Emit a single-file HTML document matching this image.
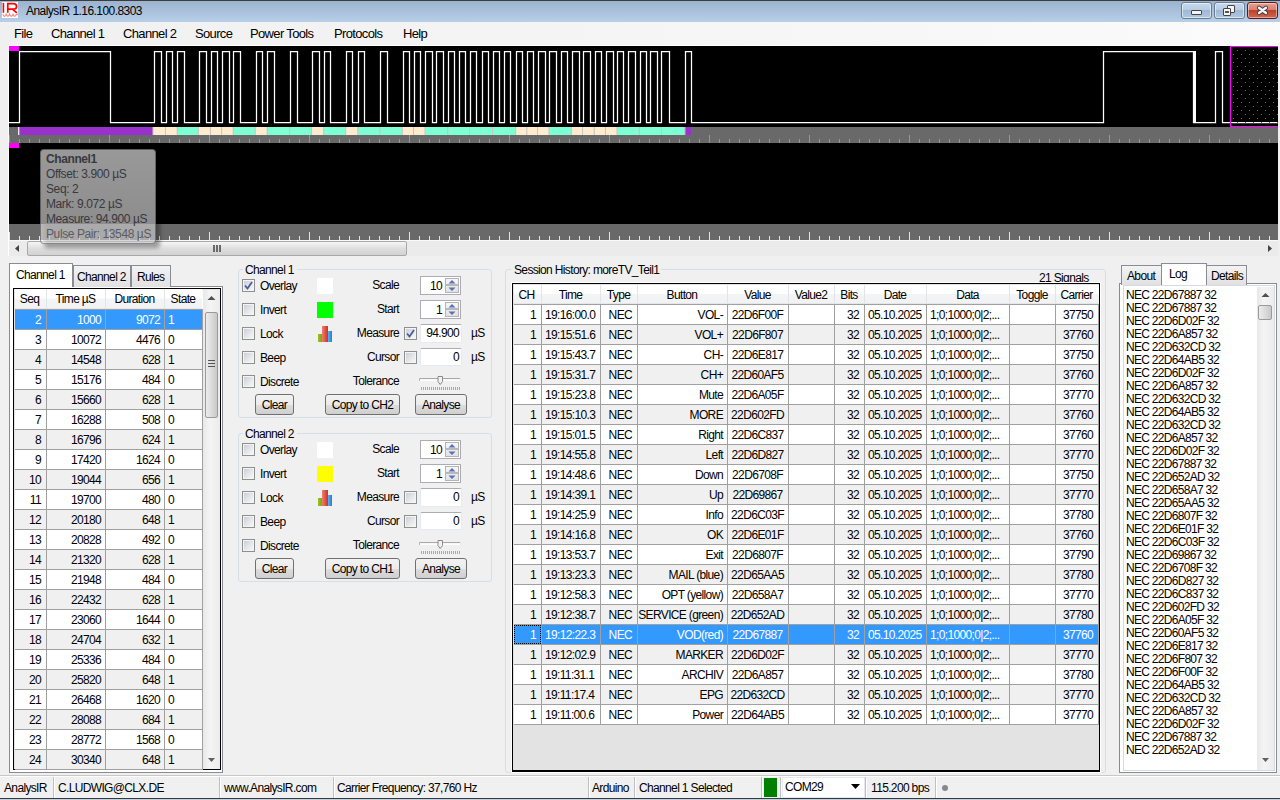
<!DOCTYPE html><html><head><meta charset="utf-8"><style>
*{margin:0;padding:0;box-sizing:border-box}
html,body{width:1280px;height:800px;overflow:hidden;background:#f0f0f0;font-family:"Liberation Sans",sans-serif;font-size:12px;color:#000;letter-spacing:-0.65px}
.ab{position:absolute}
.t{position:absolute;white-space:nowrap;line-height:14px}
.r{text-align:right}
.c{text-align:center}
</style></head><body>
<div class="ab" style="left:0px;top:0px;width:1280px;height:1px;background:#3c3c3c"></div>
<div class="ab" style="left:0px;top:1px;width:1280px;height:21px;background:linear-gradient(#9bb3cf,#b8cfe8)"></div>
<div class="ab" style="left:2px;top:2px;width:16px;height:16px;background:#fff"></div>
<svg class="ab" style="left:0;top:0" width="20" height="20"><rect x="2.6" y="2.9" width="1.6" height="9.9" fill="#f00"/><path d="M7.8 12.8 V3.7 H13.2 Q16.6 3.7 16.6 6.4 Q16.6 9.1 13.2 9.1 H7.8 M12.4 9.1 L16.9 12.8" stroke="#f00" stroke-width="1.7" fill="none"/><path d="M2.8 14.3 Q4.5 18.3 6.2 14.3 Q7.9 18.3 9.6 14.3 Q11.3 18.3 13 14.3 Q14.7 18.3 16.4 14.3 L18 14.3" stroke="#ff8c8c" stroke-width="1.3" fill="none"/></svg>
<div class="t " style="left:26px;top:4px;font-size:12px;letter-spacing:-0.55px">AnalysIR 1.16.100.8303</div>
<div class="ab" style="left:1181px;top:2px;width:31px;height:17px;background:linear-gradient(#c6d8ec 0%,#b8cde4 45%,#9fb8d4 50%,#b0c8e2 100%);border:1px solid #6a7c92;border-radius:3px;box-shadow:inset 0 0 0 1px rgba(255,255,255,0.55)"></div>
<div class="ab" style="left:1214px;top:2px;width:31px;height:17px;background:linear-gradient(#c6d8ec 0%,#b8cde4 45%,#9fb8d4 50%,#b0c8e2 100%);border:1px solid #6a7c92;border-radius:3px;box-shadow:inset 0 0 0 1px rgba(255,255,255,0.55)"></div>
<div class="ab" style="left:1247px;top:2px;width:31px;height:17px;background:linear-gradient(#e8a090 0%,#d98070 45%,#c0402a 50%,#d06850 100%);border:1px solid #5a1a1a;border-radius:3px;box-shadow:inset 0 0 0 1px rgba(255,255,255,0.45)"></div>
<div class="ab" style="left:1191px;top:10px;width:11px;height:5px;background:#f4f4f4;border:1px solid #444;border-radius:1px"></div>
<div class="ab" style="left:1227px;top:5px;width:8px;height:8px;background:#f4f4f4;border:1px solid #444;border-radius:1px"></div>
<div class="ab" style="left:1223px;top:8px;width:8px;height:8px;background:#f4f4f4;border:1px solid #444;border-radius:1px"></div>
<div class="ab" style="left:1225px;top:11px;width:4px;height:2px;background:#555"></div>
<svg class="ab" style="left:1247px;top:2px" width="31" height="17"><path d="M12 5.8 L19 11 M19 5.8 L12 11" stroke="#3a3a4a" stroke-width="4.2" stroke-linecap="round"/><path d="M12 5.8 L19 11 M19 5.8 L12 11" stroke="#f4f4f4" stroke-width="2.4" stroke-linecap="round"/></svg>
<div class="ab" style="left:0px;top:22px;width:1280px;height:23px;background:linear-gradient(90deg,#f0f0f0 0%,#f5f5f5 50%,#fbfbfb 100%)"></div>
<div class="t " style="left:14px;top:26px;font-size:13px;letter-spacing:-0.65px;line-height:16px">File</div>
<div class="t " style="left:51px;top:26px;font-size:13px;letter-spacing:-0.65px;line-height:16px">Channel 1</div>
<div class="t " style="left:123px;top:26px;font-size:13px;letter-spacing:-0.65px;line-height:16px">Channel 2</div>
<div class="t " style="left:195px;top:26px;font-size:13px;letter-spacing:-0.65px;line-height:16px">Source</div>
<div class="t " style="left:250px;top:26px;font-size:13px;letter-spacing:-0.65px;line-height:16px">Power Tools</div>
<div class="t " style="left:334px;top:26px;font-size:13px;letter-spacing:-0.65px;line-height:16px">Protocols</div>
<div class="t " style="left:403px;top:26px;font-size:13px;letter-spacing:-0.65px;line-height:16px">Help</div>
<div class="ab" style="left:8px;top:45px;width:1271px;height:1px;background:#fff"></div>
<div class="ab" style="left:8px;top:45px;width:1px;height:211px;background:#fff"></div>
<div class="ab" style="left:9px;top:46px;width:1269px;height:81px;background:#000"></div>
<div class="ab" style="left:9px;top:127px;width:1269px;height:16px;background:#696969"></div>
<div class="ab" style="left:9px;top:143px;width:1269px;height:81px;background:#000"></div>
<div class="ab" style="left:9px;top:224px;width:1269px;height:16px;background:#696969"></div>
<div class="ab" style="left:9px;top:46px;width:10px;height:5px;background:#f0f"></div>
<div class="ab" style="left:9px;top:143px;width:10px;height:5px;background:#f0f"></div>
<svg class="ab" style="left:0;top:0" width="1280" height="260"><path d="M9 122.5 L19.5 122.5 L19.5 51.5 L110.5 51.5 L110.5 122.5 L154.5 122.5 L154.5 51.5 L161.5 51.5 L161.5 122.5 L166.5 122.5 L166.5 51.5 L172.5 51.5 L172.5 122.5 L177.5 122.5 L177.5 51.5 L184.5 51.5 L184.5 122.5 L199.5 122.5 L199.5 51.5 L206.5 51.5 L206.5 122.5 L211.5 122.5 L211.5 51.5 L217.5 51.5 L217.5 122.5 L222.5 122.5 L222.5 51.5 L229.5 51.5 L229.5 122.5 L233.5 122.5 L233.5 51.5 L240.5 51.5 L240.5 122.5 L256.5 122.5 L256.5 51.5 L262.5 51.5 L262.5 122.5 L267.5 122.5 L267.5 51.5 L274.5 51.5 L274.5 122.5 L290.5 122.5 L290.5 51.5 L297.5 51.5 L297.5 122.5 L312.5 122.5 L312.5 51.5 L319.5 51.5 L319.5 122.5 L324.5 122.5 L324.5 51.5 L330.5 51.5 L330.5 122.5 L346.5 122.5 L346.5 51.5 L352.5 51.5 L352.5 122.5 L358.5 122.5 L358.5 51.5 L364.5 51.5 L364.5 122.5 L380.5 122.5 L380.5 51.5 L387.5 51.5 L387.5 122.5 L403.5 122.5 L403.5 51.5 L409.5 51.5 L409.5 122.5 L414.5 122.5 L414.5 51.5 L420.5 51.5 L420.5 122.5 L425.5 122.5 L425.5 51.5 L432.5 51.5 L432.5 122.5 L436.5 122.5 L436.5 51.5 L443.5 51.5 L443.5 122.5 L448.5 122.5 L448.5 51.5 L454.5 51.5 L454.5 122.5 L459.5 122.5 L459.5 51.5 L465.5 51.5 L465.5 122.5 L470.5 122.5 L470.5 51.5 L476.5 51.5 L476.5 122.5 L482.5 122.5 L482.5 51.5 L488.5 51.5 L488.5 122.5 L493.5 122.5 L493.5 51.5 L499.5 51.5 L499.5 122.5 L504.5 122.5 L504.5 51.5 L510.5 51.5 L510.5 122.5 L516.5 122.5 L516.5 51.5 L522.5 51.5 L522.5 122.5 L527.5 122.5 L527.5 51.5 L533.5 51.5 L533.5 122.5 L538.5 122.5 L538.5 51.5 L545.5 51.5 L545.5 122.5 L549.5 122.5 L549.5 51.5 L556.5 51.5 L556.5 122.5 L561.5 122.5 L561.5 51.5 L567.5 51.5 L567.5 122.5 L572.5 122.5 L572.5 51.5 L579.5 51.5 L579.5 122.5 L583.5 122.5 L583.5 51.5 L590.5 51.5 L590.5 122.5 L595.5 122.5 L595.5 51.5 L601.5 51.5 L601.5 122.5 L606.5 122.5 L606.5 51.5 L613.5 51.5 L613.5 122.5 L617.5 122.5 L617.5 51.5 L623.5 51.5 L623.5 122.5 L628.5 122.5 L628.5 51.5 L635.5 51.5 L635.5 122.5 L640.5 122.5 L640.5 51.5 L646.5 51.5 L646.5 122.5 L650.5 122.5 L650.5 51.5 L657.5 51.5 L657.5 122.5 L661.5 122.5 L661.5 51.5 L669.5 51.5 L669.5 122.5 L685.5 122.5 L685.5 51.5 L691.5 51.5 L691.5 122.5 L1103.5 122.5 L1103.5 51.5 L1193.5 51.5 L1193.5 122.5 L1215.5 122.5 L1215.5 51.5 L1222.5 51.5 L1222.5 122.5 L1278 122.5" stroke="#fff" stroke-width="1.25" fill="none" stroke-linejoin="miter"/><rect x="1193" y="51" width="3" height="72" fill="#fff"/></svg>
<svg class="ab" style="left:1230px;top:46px" width="48" height="81"><rect x="7" y="4" width="1" height="1" fill="#f0f"/><rect x="15" y="4" width="1" height="1" fill="#f0f"/><rect x="23" y="4" width="1" height="1" fill="#f0f"/><rect x="31" y="4" width="1" height="1" fill="#f0f"/><rect x="39" y="4" width="1" height="1" fill="#f0f"/><rect x="47" y="4" width="1" height="1" fill="#f0f"/><rect x="3" y="8" width="1" height="1" fill="#f0f"/><rect x="11" y="8" width="1" height="1" fill="#f0f"/><rect x="19" y="8" width="1" height="1" fill="#f0f"/><rect x="27" y="8" width="1" height="1" fill="#f0f"/><rect x="35" y="8" width="1" height="1" fill="#f0f"/><rect x="43" y="8" width="1" height="1" fill="#f0f"/><rect x="7" y="12" width="1" height="1" fill="#f0f"/><rect x="15" y="12" width="1" height="1" fill="#f0f"/><rect x="23" y="12" width="1" height="1" fill="#f0f"/><rect x="31" y="12" width="1" height="1" fill="#f0f"/><rect x="39" y="12" width="1" height="1" fill="#f0f"/><rect x="47" y="12" width="1" height="1" fill="#f0f"/><rect x="3" y="16" width="1" height="1" fill="#f0f"/><rect x="11" y="16" width="1" height="1" fill="#f0f"/><rect x="19" y="16" width="1" height="1" fill="#f0f"/><rect x="27" y="16" width="1" height="1" fill="#f0f"/><rect x="35" y="16" width="1" height="1" fill="#f0f"/><rect x="43" y="16" width="1" height="1" fill="#f0f"/><rect x="7" y="20" width="1" height="1" fill="#f0f"/><rect x="15" y="20" width="1" height="1" fill="#f0f"/><rect x="23" y="20" width="1" height="1" fill="#f0f"/><rect x="31" y="20" width="1" height="1" fill="#f0f"/><rect x="39" y="20" width="1" height="1" fill="#f0f"/><rect x="47" y="20" width="1" height="1" fill="#f0f"/><rect x="3" y="24" width="1" height="1" fill="#f0f"/><rect x="11" y="24" width="1" height="1" fill="#f0f"/><rect x="19" y="24" width="1" height="1" fill="#f0f"/><rect x="27" y="24" width="1" height="1" fill="#f0f"/><rect x="35" y="24" width="1" height="1" fill="#f0f"/><rect x="43" y="24" width="1" height="1" fill="#f0f"/><rect x="7" y="28" width="1" height="1" fill="#f0f"/><rect x="15" y="28" width="1" height="1" fill="#f0f"/><rect x="23" y="28" width="1" height="1" fill="#f0f"/><rect x="31" y="28" width="1" height="1" fill="#f0f"/><rect x="39" y="28" width="1" height="1" fill="#f0f"/><rect x="47" y="28" width="1" height="1" fill="#f0f"/><rect x="3" y="32" width="1" height="1" fill="#f0f"/><rect x="11" y="32" width="1" height="1" fill="#f0f"/><rect x="19" y="32" width="1" height="1" fill="#f0f"/><rect x="27" y="32" width="1" height="1" fill="#f0f"/><rect x="35" y="32" width="1" height="1" fill="#f0f"/><rect x="43" y="32" width="1" height="1" fill="#f0f"/><rect x="7" y="36" width="1" height="1" fill="#f0f"/><rect x="15" y="36" width="1" height="1" fill="#f0f"/><rect x="23" y="36" width="1" height="1" fill="#f0f"/><rect x="31" y="36" width="1" height="1" fill="#f0f"/><rect x="39" y="36" width="1" height="1" fill="#f0f"/><rect x="47" y="36" width="1" height="1" fill="#f0f"/><rect x="3" y="40" width="1" height="1" fill="#f0f"/><rect x="11" y="40" width="1" height="1" fill="#f0f"/><rect x="19" y="40" width="1" height="1" fill="#f0f"/><rect x="27" y="40" width="1" height="1" fill="#f0f"/><rect x="35" y="40" width="1" height="1" fill="#f0f"/><rect x="43" y="40" width="1" height="1" fill="#f0f"/><rect x="7" y="44" width="1" height="1" fill="#f0f"/><rect x="15" y="44" width="1" height="1" fill="#f0f"/><rect x="23" y="44" width="1" height="1" fill="#f0f"/><rect x="31" y="44" width="1" height="1" fill="#f0f"/><rect x="39" y="44" width="1" height="1" fill="#f0f"/><rect x="47" y="44" width="1" height="1" fill="#f0f"/><rect x="3" y="48" width="1" height="1" fill="#f0f"/><rect x="11" y="48" width="1" height="1" fill="#f0f"/><rect x="19" y="48" width="1" height="1" fill="#f0f"/><rect x="27" y="48" width="1" height="1" fill="#f0f"/><rect x="35" y="48" width="1" height="1" fill="#f0f"/><rect x="43" y="48" width="1" height="1" fill="#f0f"/><rect x="7" y="52" width="1" height="1" fill="#f0f"/><rect x="15" y="52" width="1" height="1" fill="#f0f"/><rect x="23" y="52" width="1" height="1" fill="#f0f"/><rect x="31" y="52" width="1" height="1" fill="#f0f"/><rect x="39" y="52" width="1" height="1" fill="#f0f"/><rect x="47" y="52" width="1" height="1" fill="#f0f"/><rect x="3" y="56" width="1" height="1" fill="#f0f"/><rect x="11" y="56" width="1" height="1" fill="#f0f"/><rect x="19" y="56" width="1" height="1" fill="#f0f"/><rect x="27" y="56" width="1" height="1" fill="#f0f"/><rect x="35" y="56" width="1" height="1" fill="#f0f"/><rect x="43" y="56" width="1" height="1" fill="#f0f"/><rect x="7" y="60" width="1" height="1" fill="#f0f"/><rect x="15" y="60" width="1" height="1" fill="#f0f"/><rect x="23" y="60" width="1" height="1" fill="#f0f"/><rect x="31" y="60" width="1" height="1" fill="#f0f"/><rect x="39" y="60" width="1" height="1" fill="#f0f"/><rect x="47" y="60" width="1" height="1" fill="#f0f"/><rect x="3" y="64" width="1" height="1" fill="#f0f"/><rect x="11" y="64" width="1" height="1" fill="#f0f"/><rect x="19" y="64" width="1" height="1" fill="#f0f"/><rect x="27" y="64" width="1" height="1" fill="#f0f"/><rect x="35" y="64" width="1" height="1" fill="#f0f"/><rect x="43" y="64" width="1" height="1" fill="#f0f"/><rect x="7" y="68" width="1" height="1" fill="#f0f"/><rect x="15" y="68" width="1" height="1" fill="#f0f"/><rect x="23" y="68" width="1" height="1" fill="#f0f"/><rect x="31" y="68" width="1" height="1" fill="#f0f"/><rect x="39" y="68" width="1" height="1" fill="#f0f"/><rect x="47" y="68" width="1" height="1" fill="#f0f"/><rect x="3" y="72" width="1" height="1" fill="#f0f"/><rect x="11" y="72" width="1" height="1" fill="#f0f"/><rect x="19" y="72" width="1" height="1" fill="#f0f"/><rect x="27" y="72" width="1" height="1" fill="#f0f"/><rect x="35" y="72" width="1" height="1" fill="#f0f"/><rect x="43" y="72" width="1" height="1" fill="#f0f"/><rect x="7" y="76" width="1" height="1" fill="#f0f"/><rect x="15" y="76" width="1" height="1" fill="#f0f"/><rect x="23" y="76" width="1" height="1" fill="#f0f"/><rect x="31" y="76" width="1" height="1" fill="#f0f"/><rect x="39" y="76" width="1" height="1" fill="#f0f"/><rect x="47" y="76" width="1" height="1" fill="#f0f"/><rect x="0" y="0" width="48" height="1" fill="#f0f"/><rect x="0" y="0" width="1" height="81" fill="#f0f"/><rect x="0" y="80" width="48" height="1" fill="#f0f"/></svg>
<svg class="ab" style="left:0;top:127px" width="700" height="8"><rect x="19.0" y="0" width="134.0" height="8" fill="#9932cc"/><rect x="18.5" y="0" width="1" height="8" fill="#c8c8c8"/><rect x="153.0" y="0" width="12.5" height="8" fill="#ffebcd"/><rect x="152.5" y="0" width="1" height="8" fill="#c8c8c8"/><rect x="165.5" y="0" width="11.7" height="8" fill="#ffebcd"/><rect x="165.0" y="0" width="1" height="8" fill="#c8c8c8"/><rect x="177.2" y="0" width="21.1" height="8" fill="#7fffd4"/><rect x="176.7" y="0" width="1" height="8" fill="#c8c8c8"/><rect x="198.3" y="0" width="12.0" height="8" fill="#ffebcd"/><rect x="197.8" y="0" width="1" height="8" fill="#c8c8c8"/><rect x="210.3" y="0" width="11.4" height="8" fill="#ffebcd"/><rect x="209.8" y="0" width="1" height="8" fill="#c8c8c8"/><rect x="221.7" y="0" width="11.5" height="8" fill="#ffebcd"/><rect x="221.2" y="0" width="1" height="8" fill="#c8c8c8"/><rect x="233.2" y="0" width="22.0" height="8" fill="#7fffd4"/><rect x="232.7" y="0" width="1" height="8" fill="#c8c8c8"/><rect x="255.2" y="0" width="12.0" height="8" fill="#ffebcd"/><rect x="254.7" y="0" width="1" height="8" fill="#c8c8c8"/><rect x="267.2" y="0" width="22.5" height="8" fill="#7fffd4"/><rect x="266.7" y="0" width="1" height="8" fill="#c8c8c8"/><rect x="289.7" y="0" width="21.9" height="8" fill="#7fffd4"/><rect x="289.2" y="0" width="1" height="8" fill="#c8c8c8"/><rect x="311.6" y="0" width="12.1" height="8" fill="#ffebcd"/><rect x="311.1" y="0" width="1" height="8" fill="#c8c8c8"/><rect x="323.7" y="0" width="22.0" height="8" fill="#7fffd4"/><rect x="323.2" y="0" width="1" height="8" fill="#c8c8c8"/><rect x="345.7" y="0" width="12.2" height="8" fill="#ffebcd"/><rect x="345.2" y="0" width="1" height="8" fill="#c8c8c8"/><rect x="357.9" y="0" width="22.0" height="8" fill="#7fffd4"/><rect x="357.4" y="0" width="1" height="8" fill="#c8c8c8"/><rect x="379.9" y="0" width="22.3" height="8" fill="#7fffd4"/><rect x="379.4" y="0" width="1" height="8" fill="#c8c8c8"/><rect x="402.2" y="0" width="11.4" height="8" fill="#ffebcd"/><rect x="401.7" y="0" width="1" height="8" fill="#c8c8c8"/><rect x="413.6" y="0" width="11.4" height="8" fill="#ffebcd"/><rect x="413.1" y="0" width="1" height="8" fill="#c8c8c8"/><rect x="425.0" y="0" width="22.8" height="8" fill="#7fffd4"/><rect x="424.5" y="0" width="1" height="8" fill="#c8c8c8"/><rect x="447.8" y="0" width="21.7" height="8" fill="#7fffd4"/><rect x="447.3" y="0" width="1" height="8" fill="#c8c8c8"/><rect x="469.5" y="0" width="23.0" height="8" fill="#7fffd4"/><rect x="469.0" y="0" width="1" height="8" fill="#c8c8c8"/><rect x="492.5" y="0" width="23.1" height="8" fill="#7fffd4"/><rect x="492.0" y="0" width="1" height="8" fill="#c8c8c8"/><rect x="515.6" y="0" width="11.2" height="8" fill="#ffebcd"/><rect x="515.1" y="0" width="1" height="8" fill="#c8c8c8"/><rect x="526.8" y="0" width="10.7" height="8" fill="#ffebcd"/><rect x="526.3" y="0" width="1" height="8" fill="#c8c8c8"/><rect x="537.5" y="0" width="11.5" height="8" fill="#ffebcd"/><rect x="537.0" y="0" width="1" height="8" fill="#c8c8c8"/><rect x="549.0" y="0" width="22.3" height="8" fill="#7fffd4"/><rect x="548.5" y="0" width="1" height="8" fill="#c8c8c8"/><rect x="571.3" y="0" width="11.2" height="8" fill="#ffebcd"/><rect x="570.8" y="0" width="1" height="8" fill="#c8c8c8"/><rect x="582.5" y="0" width="11.7" height="8" fill="#ffebcd"/><rect x="582.0" y="0" width="1" height="8" fill="#c8c8c8"/><rect x="594.2" y="0" width="11.3" height="8" fill="#ffebcd"/><rect x="593.7" y="0" width="1" height="8" fill="#c8c8c8"/><rect x="605.5" y="0" width="11.5" height="8" fill="#ffebcd"/><rect x="605.0" y="0" width="1" height="8" fill="#c8c8c8"/><rect x="617.0" y="0" width="22.2" height="8" fill="#7fffd4"/><rect x="616.5" y="0" width="1" height="8" fill="#c8c8c8"/><rect x="639.2" y="0" width="22.3" height="8" fill="#7fffd4"/><rect x="638.7" y="0" width="1" height="8" fill="#c8c8c8"/><rect x="661.5" y="0" width="23.4" height="8" fill="#7fffd4"/><rect x="661.0" y="0" width="1" height="8" fill="#c8c8c8"/><rect x="684.9" y="0" width="6.1" height="8" fill="#9932cc"/><rect x="684.4" y="0" width="1" height="8" fill="#c8c8c8"/></svg>
<div class="ab" style="left:18px;top:127px;width:1px;height:8px;background:#e8e8e8"></div>
<svg class="ab" style="left:0;top:135px" width="1280" height="8"><rect x="9" y="0" width="1" height="8" fill="#0f0"/><rect x="19" y="4" width="1" height="4" fill="#0f0"/><rect x="29" y="4" width="1" height="4" fill="#0f0"/><rect x="39" y="4" width="1" height="4" fill="#0f0"/><rect x="49" y="4" width="1" height="4" fill="#0f0"/><rect x="59" y="4" width="1" height="4" fill="#0f0"/><rect x="69" y="4" width="1" height="4" fill="#0f0"/><rect x="79" y="4" width="1" height="4" fill="#0f0"/><rect x="89" y="4" width="1" height="4" fill="#0f0"/><rect x="99" y="4" width="1" height="4" fill="#0f0"/><rect x="109" y="0" width="1" height="8" fill="#0f0"/><rect x="119" y="4" width="1" height="4" fill="#0f0"/><rect x="129" y="4" width="1" height="4" fill="#0f0"/><rect x="139" y="4" width="1" height="4" fill="#0f0"/><rect x="149" y="4" width="1" height="4" fill="#0f0"/><rect x="159" y="4" width="1" height="4" fill="#0f0"/><rect x="169" y="4" width="1" height="4" fill="#0f0"/><rect x="179" y="4" width="1" height="4" fill="#0f0"/><rect x="189" y="4" width="1" height="4" fill="#0f0"/><rect x="199" y="4" width="1" height="4" fill="#0f0"/><rect x="209" y="0" width="1" height="8" fill="#0f0"/><rect x="219" y="4" width="1" height="4" fill="#0f0"/><rect x="229" y="4" width="1" height="4" fill="#0f0"/><rect x="239" y="4" width="1" height="4" fill="#0f0"/><rect x="249" y="4" width="1" height="4" fill="#0f0"/><rect x="259" y="4" width="1" height="4" fill="#0f0"/><rect x="269" y="4" width="1" height="4" fill="#0f0"/><rect x="279" y="4" width="1" height="4" fill="#0f0"/><rect x="289" y="4" width="1" height="4" fill="#0f0"/><rect x="299" y="4" width="1" height="4" fill="#0f0"/><rect x="309" y="0" width="1" height="8" fill="#0f0"/><rect x="319" y="4" width="1" height="4" fill="#0f0"/><rect x="329" y="4" width="1" height="4" fill="#0f0"/><rect x="339" y="4" width="1" height="4" fill="#0f0"/><rect x="349" y="4" width="1" height="4" fill="#0f0"/><rect x="359" y="4" width="1" height="4" fill="#0f0"/><rect x="369" y="4" width="1" height="4" fill="#0f0"/><rect x="379" y="4" width="1" height="4" fill="#0f0"/><rect x="389" y="4" width="1" height="4" fill="#0f0"/><rect x="399" y="4" width="1" height="4" fill="#0f0"/><rect x="409" y="0" width="1" height="8" fill="#0f0"/><rect x="419" y="4" width="1" height="4" fill="#0f0"/><rect x="429" y="4" width="1" height="4" fill="#0f0"/><rect x="439" y="4" width="1" height="4" fill="#0f0"/><rect x="449" y="4" width="1" height="4" fill="#0f0"/><rect x="459" y="4" width="1" height="4" fill="#0f0"/><rect x="469" y="4" width="1" height="4" fill="#0f0"/><rect x="479" y="4" width="1" height="4" fill="#0f0"/><rect x="489" y="4" width="1" height="4" fill="#0f0"/><rect x="499" y="4" width="1" height="4" fill="#0f0"/><rect x="509" y="0" width="1" height="8" fill="#0f0"/><rect x="519" y="4" width="1" height="4" fill="#0f0"/><rect x="529" y="4" width="1" height="4" fill="#0f0"/><rect x="539" y="4" width="1" height="4" fill="#0f0"/><rect x="549" y="4" width="1" height="4" fill="#0f0"/><rect x="559" y="4" width="1" height="4" fill="#0f0"/><rect x="569" y="4" width="1" height="4" fill="#0f0"/><rect x="579" y="4" width="1" height="4" fill="#0f0"/><rect x="589" y="4" width="1" height="4" fill="#0f0"/><rect x="599" y="4" width="1" height="4" fill="#0f0"/><rect x="609" y="0" width="1" height="8" fill="#0f0"/><rect x="619" y="4" width="1" height="4" fill="#0f0"/><rect x="629" y="4" width="1" height="4" fill="#0f0"/><rect x="639" y="4" width="1" height="4" fill="#0f0"/><rect x="649" y="4" width="1" height="4" fill="#0f0"/><rect x="659" y="4" width="1" height="4" fill="#0f0"/><rect x="669" y="4" width="1" height="4" fill="#0f0"/><rect x="679" y="4" width="1" height="4" fill="#0f0"/><rect x="689" y="4" width="1" height="4" fill="#0f0"/><rect x="699" y="4" width="1" height="4" fill="#0f0"/><rect x="709" y="0" width="1" height="8" fill="#0f0"/><rect x="719" y="4" width="1" height="4" fill="#0f0"/><rect x="729" y="4" width="1" height="4" fill="#0f0"/><rect x="739" y="4" width="1" height="4" fill="#0f0"/><rect x="749" y="4" width="1" height="4" fill="#0f0"/><rect x="759" y="4" width="1" height="4" fill="#0f0"/><rect x="769" y="4" width="1" height="4" fill="#0f0"/><rect x="779" y="4" width="1" height="4" fill="#0f0"/><rect x="789" y="4" width="1" height="4" fill="#0f0"/><rect x="799" y="4" width="1" height="4" fill="#0f0"/><rect x="809" y="0" width="1" height="8" fill="#0f0"/><rect x="819" y="4" width="1" height="4" fill="#0f0"/><rect x="829" y="4" width="1" height="4" fill="#0f0"/><rect x="839" y="4" width="1" height="4" fill="#0f0"/><rect x="849" y="4" width="1" height="4" fill="#0f0"/><rect x="859" y="4" width="1" height="4" fill="#0f0"/><rect x="869" y="4" width="1" height="4" fill="#0f0"/><rect x="879" y="4" width="1" height="4" fill="#0f0"/><rect x="889" y="4" width="1" height="4" fill="#0f0"/><rect x="899" y="4" width="1" height="4" fill="#0f0"/><rect x="909" y="0" width="1" height="8" fill="#0f0"/><rect x="919" y="4" width="1" height="4" fill="#0f0"/><rect x="929" y="4" width="1" height="4" fill="#0f0"/><rect x="939" y="4" width="1" height="4" fill="#0f0"/><rect x="949" y="4" width="1" height="4" fill="#0f0"/><rect x="959" y="4" width="1" height="4" fill="#0f0"/><rect x="969" y="4" width="1" height="4" fill="#0f0"/><rect x="979" y="4" width="1" height="4" fill="#0f0"/><rect x="989" y="4" width="1" height="4" fill="#0f0"/><rect x="999" y="4" width="1" height="4" fill="#0f0"/><rect x="1009" y="0" width="1" height="8" fill="#0f0"/><rect x="1019" y="4" width="1" height="4" fill="#0f0"/><rect x="1029" y="4" width="1" height="4" fill="#0f0"/><rect x="1039" y="4" width="1" height="4" fill="#0f0"/><rect x="1049" y="4" width="1" height="4" fill="#0f0"/><rect x="1059" y="4" width="1" height="4" fill="#0f0"/><rect x="1069" y="4" width="1" height="4" fill="#0f0"/><rect x="1079" y="4" width="1" height="4" fill="#0f0"/><rect x="1089" y="4" width="1" height="4" fill="#0f0"/><rect x="1099" y="4" width="1" height="4" fill="#0f0"/><rect x="1109" y="0" width="1" height="8" fill="#0f0"/><rect x="1119" y="4" width="1" height="4" fill="#0f0"/><rect x="1129" y="4" width="1" height="4" fill="#0f0"/><rect x="1139" y="4" width="1" height="4" fill="#0f0"/><rect x="1149" y="4" width="1" height="4" fill="#0f0"/><rect x="1159" y="4" width="1" height="4" fill="#0f0"/><rect x="1169" y="4" width="1" height="4" fill="#0f0"/><rect x="1179" y="4" width="1" height="4" fill="#0f0"/><rect x="1189" y="4" width="1" height="4" fill="#0f0"/><rect x="1199" y="4" width="1" height="4" fill="#0f0"/><rect x="1209" y="0" width="1" height="8" fill="#0f0"/><rect x="1219" y="4" width="1" height="4" fill="#0f0"/><rect x="1229" y="4" width="1" height="4" fill="#0f0"/><rect x="1239" y="4" width="1" height="4" fill="#0f0"/><rect x="1249" y="4" width="1" height="4" fill="#0f0"/><rect x="1259" y="4" width="1" height="4" fill="#0f0"/><rect x="1269" y="4" width="1" height="4" fill="#0f0"/></svg>
<svg class="ab" style="left:0;top:224px" width="1280" height="16"><rect x="9" y="8" width="1" height="8" fill="#ff0"/><rect x="19" y="12" width="1" height="4" fill="#ff0"/><rect x="29" y="12" width="1" height="4" fill="#ff0"/><rect x="39" y="12" width="1" height="4" fill="#ff0"/><rect x="49" y="12" width="1" height="4" fill="#ff0"/><rect x="59" y="12" width="1" height="4" fill="#ff0"/><rect x="69" y="12" width="1" height="4" fill="#ff0"/><rect x="79" y="12" width="1" height="4" fill="#ff0"/><rect x="89" y="12" width="1" height="4" fill="#ff0"/><rect x="99" y="12" width="1" height="4" fill="#ff0"/><rect x="109" y="8" width="1" height="8" fill="#ff0"/><rect x="119" y="12" width="1" height="4" fill="#ff0"/><rect x="129" y="12" width="1" height="4" fill="#ff0"/><rect x="139" y="12" width="1" height="4" fill="#ff0"/><rect x="149" y="12" width="1" height="4" fill="#ff0"/><rect x="159" y="12" width="1" height="4" fill="#ff0"/><rect x="169" y="12" width="1" height="4" fill="#ff0"/><rect x="179" y="12" width="1" height="4" fill="#ff0"/><rect x="189" y="12" width="1" height="4" fill="#ff0"/><rect x="199" y="12" width="1" height="4" fill="#ff0"/><rect x="209" y="8" width="1" height="8" fill="#ff0"/><rect x="219" y="12" width="1" height="4" fill="#ff0"/><rect x="229" y="12" width="1" height="4" fill="#ff0"/><rect x="239" y="12" width="1" height="4" fill="#ff0"/><rect x="249" y="12" width="1" height="4" fill="#ff0"/><rect x="259" y="12" width="1" height="4" fill="#ff0"/><rect x="269" y="12" width="1" height="4" fill="#ff0"/><rect x="279" y="12" width="1" height="4" fill="#ff0"/><rect x="289" y="12" width="1" height="4" fill="#ff0"/><rect x="299" y="12" width="1" height="4" fill="#ff0"/><rect x="309" y="8" width="1" height="8" fill="#ff0"/><rect x="319" y="12" width="1" height="4" fill="#ff0"/><rect x="329" y="12" width="1" height="4" fill="#ff0"/><rect x="339" y="12" width="1" height="4" fill="#ff0"/><rect x="349" y="12" width="1" height="4" fill="#ff0"/><rect x="359" y="12" width="1" height="4" fill="#ff0"/><rect x="369" y="12" width="1" height="4" fill="#ff0"/><rect x="379" y="12" width="1" height="4" fill="#ff0"/><rect x="389" y="12" width="1" height="4" fill="#ff0"/><rect x="399" y="12" width="1" height="4" fill="#ff0"/><rect x="409" y="8" width="1" height="8" fill="#ff0"/><rect x="419" y="12" width="1" height="4" fill="#ff0"/><rect x="429" y="12" width="1" height="4" fill="#ff0"/><rect x="439" y="12" width="1" height="4" fill="#ff0"/><rect x="449" y="12" width="1" height="4" fill="#ff0"/><rect x="459" y="12" width="1" height="4" fill="#ff0"/><rect x="469" y="12" width="1" height="4" fill="#ff0"/><rect x="479" y="12" width="1" height="4" fill="#ff0"/><rect x="489" y="12" width="1" height="4" fill="#ff0"/><rect x="499" y="12" width="1" height="4" fill="#ff0"/><rect x="509" y="8" width="1" height="8" fill="#ff0"/><rect x="519" y="12" width="1" height="4" fill="#ff0"/><rect x="529" y="12" width="1" height="4" fill="#ff0"/><rect x="539" y="12" width="1" height="4" fill="#ff0"/><rect x="549" y="12" width="1" height="4" fill="#ff0"/><rect x="559" y="12" width="1" height="4" fill="#ff0"/><rect x="569" y="12" width="1" height="4" fill="#ff0"/><rect x="579" y="12" width="1" height="4" fill="#ff0"/><rect x="589" y="12" width="1" height="4" fill="#ff0"/><rect x="599" y="12" width="1" height="4" fill="#ff0"/><rect x="609" y="8" width="1" height="8" fill="#ff0"/><rect x="619" y="12" width="1" height="4" fill="#ff0"/><rect x="629" y="12" width="1" height="4" fill="#ff0"/><rect x="639" y="12" width="1" height="4" fill="#ff0"/><rect x="649" y="12" width="1" height="4" fill="#ff0"/><rect x="659" y="12" width="1" height="4" fill="#ff0"/><rect x="669" y="12" width="1" height="4" fill="#ff0"/><rect x="679" y="12" width="1" height="4" fill="#ff0"/><rect x="689" y="12" width="1" height="4" fill="#ff0"/><rect x="699" y="12" width="1" height="4" fill="#ff0"/><rect x="709" y="8" width="1" height="8" fill="#ff0"/><rect x="719" y="12" width="1" height="4" fill="#ff0"/><rect x="729" y="12" width="1" height="4" fill="#ff0"/><rect x="739" y="12" width="1" height="4" fill="#ff0"/><rect x="749" y="12" width="1" height="4" fill="#ff0"/><rect x="759" y="12" width="1" height="4" fill="#ff0"/><rect x="769" y="12" width="1" height="4" fill="#ff0"/><rect x="779" y="12" width="1" height="4" fill="#ff0"/><rect x="789" y="12" width="1" height="4" fill="#ff0"/><rect x="799" y="12" width="1" height="4" fill="#ff0"/><rect x="809" y="8" width="1" height="8" fill="#ff0"/><rect x="819" y="12" width="1" height="4" fill="#ff0"/><rect x="829" y="12" width="1" height="4" fill="#ff0"/><rect x="839" y="12" width="1" height="4" fill="#ff0"/><rect x="849" y="12" width="1" height="4" fill="#ff0"/><rect x="859" y="12" width="1" height="4" fill="#ff0"/><rect x="869" y="12" width="1" height="4" fill="#ff0"/><rect x="879" y="12" width="1" height="4" fill="#ff0"/><rect x="889" y="12" width="1" height="4" fill="#ff0"/><rect x="899" y="12" width="1" height="4" fill="#ff0"/><rect x="909" y="8" width="1" height="8" fill="#ff0"/><rect x="919" y="12" width="1" height="4" fill="#ff0"/><rect x="929" y="12" width="1" height="4" fill="#ff0"/><rect x="939" y="12" width="1" height="4" fill="#ff0"/><rect x="949" y="12" width="1" height="4" fill="#ff0"/><rect x="959" y="12" width="1" height="4" fill="#ff0"/><rect x="969" y="12" width="1" height="4" fill="#ff0"/><rect x="979" y="12" width="1" height="4" fill="#ff0"/><rect x="989" y="12" width="1" height="4" fill="#ff0"/><rect x="999" y="12" width="1" height="4" fill="#ff0"/><rect x="1009" y="8" width="1" height="8" fill="#ff0"/><rect x="1019" y="12" width="1" height="4" fill="#ff0"/><rect x="1029" y="12" width="1" height="4" fill="#ff0"/><rect x="1039" y="12" width="1" height="4" fill="#ff0"/><rect x="1049" y="12" width="1" height="4" fill="#ff0"/><rect x="1059" y="12" width="1" height="4" fill="#ff0"/><rect x="1069" y="12" width="1" height="4" fill="#ff0"/><rect x="1079" y="12" width="1" height="4" fill="#ff0"/><rect x="1089" y="12" width="1" height="4" fill="#ff0"/><rect x="1099" y="12" width="1" height="4" fill="#ff0"/><rect x="1109" y="8" width="1" height="8" fill="#ff0"/><rect x="1119" y="12" width="1" height="4" fill="#ff0"/><rect x="1129" y="12" width="1" height="4" fill="#ff0"/><rect x="1139" y="12" width="1" height="4" fill="#ff0"/><rect x="1149" y="12" width="1" height="4" fill="#ff0"/><rect x="1159" y="12" width="1" height="4" fill="#ff0"/><rect x="1169" y="12" width="1" height="4" fill="#ff0"/><rect x="1179" y="12" width="1" height="4" fill="#ff0"/><rect x="1189" y="12" width="1" height="4" fill="#ff0"/><rect x="1199" y="12" width="1" height="4" fill="#ff0"/><rect x="1209" y="8" width="1" height="8" fill="#ff0"/><rect x="1219" y="12" width="1" height="4" fill="#ff0"/><rect x="1229" y="12" width="1" height="4" fill="#ff0"/><rect x="1239" y="12" width="1" height="4" fill="#ff0"/><rect x="1249" y="12" width="1" height="4" fill="#ff0"/><rect x="1259" y="12" width="1" height="4" fill="#ff0"/><rect x="1269" y="12" width="1" height="4" fill="#ff0"/></svg>
<div class="ab" style="left:9px;top:240px;width:1269px;height:16px;background:#ebebeb"></div>
<div class="ab" style="left:9px;top:240px;width:1269px;height:1px;background:#fafafa"></div>
<svg class="ab" style="left:14px;top:244px" width="8" height="9"><path d="M1 4.5 L5 1 L5 8 Z" fill="#444"/></svg>
<svg class="ab" style="left:1266px;top:244px" width="8" height="9"><path d="M6 4.5 L2 1 L2 8 Z" fill="#444"/></svg>
<div class="ab" style="left:27px;top:241px;width:380px;height:15px;background:linear-gradient(#f6f6f6,#dedede 50%,#d2d2d2);border:1px solid #a8a8a8;border-radius:2px"></div>
<div class="ab" style="left:213px;top:245px;width:2px;height:7px;background:#6a6a6a"></div>
<div class="ab" style="left:216px;top:245px;width:2px;height:7px;background:#6a6a6a"></div>
<div class="ab" style="left:219px;top:245px;width:2px;height:7px;background:#6a6a6a"></div>
<div class="ab" style="left:44px;top:153px;width:116px;height:95px;background:rgba(0,0,0,0.35);border-radius:4px;filter:blur(2px)"></div>
<div class="ab" style="left:40px;top:149px;width:116px;height:95px;background:linear-gradient(rgba(255,255,255,0.60),rgba(255,255,255,0.54));border:1px solid rgba(40,40,40,0.45);border-radius:4px"></div>
<div class="t " style="left:46px;top:152px;color:#38383f;font-weight:bold;letter-spacing:-0.4px">Channel1</div>
<div class="t " style="left:46px;top:167px;color:#38383f;letter-spacing:-0.4px">Offset: 3.900 µS</div>
<div class="t " style="left:46px;top:182px;color:#38383f;letter-spacing:-0.4px">Seq: 2</div>
<div class="t " style="left:46px;top:197px;color:#38383f;letter-spacing:-0.4px">Mark: 9.072 µS</div>
<div class="t " style="left:46px;top:212px;color:#38383f;letter-spacing:-0.4px">Measure: 94.900 µS</div>
<div class="t " style="left:46px;top:227px;color:#5c5c64;letter-spacing:-0.4px">Pulse Pair: 13548 µS</div>
<div class="ab" style="left:9px;top:286px;width:214px;height:487px;background:#fff;border:1px solid #898c95"></div>
<div class="ab" style="left:73px;top:265px;width:58px;height:22px;background:linear-gradient(#f3f3f3,#e1e1e1);border:1px solid #898c95;border-bottom:none"></div>
<div class="ab" style="left:131px;top:265px;width:40px;height:22px;background:linear-gradient(#f3f3f3,#e1e1e1);border:1px solid #898c95;border-bottom:none"></div>
<div class="ab" style="left:9px;top:263px;width:64px;height:24px;background:#fff;border:1px solid #898c95;border-bottom:none"></div>
<div class="t " style="left:16px;top:268px;">Channel 1</div>
<div class="t " style="left:77px;top:270px;">Channel 2</div>
<div class="t " style="left:137px;top:270px;">Rules</div>
<div class="ab" style="left:13px;top:288px;width:208px;height:482px;background:#fff;border:1px solid #000;box-shadow:inset 0 0 0 1px #e3e3e3,0 0 0 1px #fff"></div>
<div class="ab" style="left:15px;top:289px;width:187px;height:20px;background:linear-gradient(#ffffff 0%,#ffffff 45%,#f3f4f6 50%,#f1f2f4 100%)"></div>
<div class="ab" style="left:15px;top:308px;width:187px;height:1px;background:#e6e6e6"></div>
<div class="ab" style="left:46px;top:289px;width:1px;height:20px;background:#e2e4e7"></div>
<div class="ab" style="left:105px;top:289px;width:1px;height:20px;background:#e2e4e7"></div>
<div class="ab" style="left:164px;top:289px;width:1px;height:20px;background:#e2e4e7"></div>
<div class="t c" style="left:13px;width:33px;top:292px;">Seq</div>
<div class="t c" style="left:46px;width:59px;top:292px;">Time µS</div>
<div class="t c" style="left:105px;width:59px;top:292px;">Duration</div>
<div class="t c" style="left:164px;width:38px;top:292px;">State</div>
<div class="ab" style="left:15px;top:310px;width:187px;height:20px;background:#3399ff"></div>
<div class="t r" style="left:13px;width:28px;top:313px;color:#fff;">2</div>
<div class="t r" style="left:46px;width:55px;top:313px;color:#fff;">1000</div>
<div class="t r" style="left:105px;width:55px;top:313px;color:#fff;">9072</div>
<div class="t " style="left:168px;top:313px;color:#fff;">1</div>
<div class="ab" style="left:15px;top:330px;width:187px;height:20px;background:#ffffff"></div>
<div class="t r" style="left:13px;width:28px;top:333px;">3</div>
<div class="t r" style="left:46px;width:55px;top:333px;">10072</div>
<div class="t r" style="left:105px;width:55px;top:333px;">4476</div>
<div class="t " style="left:168px;top:333px;">0</div>
<div class="ab" style="left:15px;top:350px;width:187px;height:20px;background:#f0f0f0"></div>
<div class="t r" style="left:13px;width:28px;top:353px;">4</div>
<div class="t r" style="left:46px;width:55px;top:353px;">14548</div>
<div class="t r" style="left:105px;width:55px;top:353px;">628</div>
<div class="t " style="left:168px;top:353px;">1</div>
<div class="ab" style="left:15px;top:370px;width:187px;height:20px;background:#ffffff"></div>
<div class="t r" style="left:13px;width:28px;top:373px;">5</div>
<div class="t r" style="left:46px;width:55px;top:373px;">15176</div>
<div class="t r" style="left:105px;width:55px;top:373px;">484</div>
<div class="t " style="left:168px;top:373px;">0</div>
<div class="ab" style="left:15px;top:390px;width:187px;height:20px;background:#f0f0f0"></div>
<div class="t r" style="left:13px;width:28px;top:393px;">6</div>
<div class="t r" style="left:46px;width:55px;top:393px;">15660</div>
<div class="t r" style="left:105px;width:55px;top:393px;">628</div>
<div class="t " style="left:168px;top:393px;">1</div>
<div class="ab" style="left:15px;top:410px;width:187px;height:20px;background:#ffffff"></div>
<div class="t r" style="left:13px;width:28px;top:413px;">7</div>
<div class="t r" style="left:46px;width:55px;top:413px;">16288</div>
<div class="t r" style="left:105px;width:55px;top:413px;">508</div>
<div class="t " style="left:168px;top:413px;">0</div>
<div class="ab" style="left:15px;top:430px;width:187px;height:20px;background:#f0f0f0"></div>
<div class="t r" style="left:13px;width:28px;top:433px;">8</div>
<div class="t r" style="left:46px;width:55px;top:433px;">16796</div>
<div class="t r" style="left:105px;width:55px;top:433px;">624</div>
<div class="t " style="left:168px;top:433px;">1</div>
<div class="ab" style="left:15px;top:450px;width:187px;height:20px;background:#ffffff"></div>
<div class="t r" style="left:13px;width:28px;top:453px;">9</div>
<div class="t r" style="left:46px;width:55px;top:453px;">17420</div>
<div class="t r" style="left:105px;width:55px;top:453px;">1624</div>
<div class="t " style="left:168px;top:453px;">0</div>
<div class="ab" style="left:15px;top:470px;width:187px;height:20px;background:#f0f0f0"></div>
<div class="t r" style="left:13px;width:28px;top:473px;">10</div>
<div class="t r" style="left:46px;width:55px;top:473px;">19044</div>
<div class="t r" style="left:105px;width:55px;top:473px;">656</div>
<div class="t " style="left:168px;top:473px;">1</div>
<div class="ab" style="left:15px;top:490px;width:187px;height:20px;background:#ffffff"></div>
<div class="t r" style="left:13px;width:28px;top:493px;">11</div>
<div class="t r" style="left:46px;width:55px;top:493px;">19700</div>
<div class="t r" style="left:105px;width:55px;top:493px;">480</div>
<div class="t " style="left:168px;top:493px;">0</div>
<div class="ab" style="left:15px;top:510px;width:187px;height:20px;background:#f0f0f0"></div>
<div class="t r" style="left:13px;width:28px;top:513px;">12</div>
<div class="t r" style="left:46px;width:55px;top:513px;">20180</div>
<div class="t r" style="left:105px;width:55px;top:513px;">648</div>
<div class="t " style="left:168px;top:513px;">1</div>
<div class="ab" style="left:15px;top:530px;width:187px;height:20px;background:#ffffff"></div>
<div class="t r" style="left:13px;width:28px;top:533px;">13</div>
<div class="t r" style="left:46px;width:55px;top:533px;">20828</div>
<div class="t r" style="left:105px;width:55px;top:533px;">492</div>
<div class="t " style="left:168px;top:533px;">0</div>
<div class="ab" style="left:15px;top:550px;width:187px;height:20px;background:#f0f0f0"></div>
<div class="t r" style="left:13px;width:28px;top:553px;">14</div>
<div class="t r" style="left:46px;width:55px;top:553px;">21320</div>
<div class="t r" style="left:105px;width:55px;top:553px;">628</div>
<div class="t " style="left:168px;top:553px;">1</div>
<div class="ab" style="left:15px;top:570px;width:187px;height:20px;background:#ffffff"></div>
<div class="t r" style="left:13px;width:28px;top:573px;">15</div>
<div class="t r" style="left:46px;width:55px;top:573px;">21948</div>
<div class="t r" style="left:105px;width:55px;top:573px;">484</div>
<div class="t " style="left:168px;top:573px;">0</div>
<div class="ab" style="left:15px;top:590px;width:187px;height:20px;background:#f0f0f0"></div>
<div class="t r" style="left:13px;width:28px;top:593px;">16</div>
<div class="t r" style="left:46px;width:55px;top:593px;">22432</div>
<div class="t r" style="left:105px;width:55px;top:593px;">628</div>
<div class="t " style="left:168px;top:593px;">1</div>
<div class="ab" style="left:15px;top:610px;width:187px;height:20px;background:#ffffff"></div>
<div class="t r" style="left:13px;width:28px;top:613px;">17</div>
<div class="t r" style="left:46px;width:55px;top:613px;">23060</div>
<div class="t r" style="left:105px;width:55px;top:613px;">1644</div>
<div class="t " style="left:168px;top:613px;">0</div>
<div class="ab" style="left:15px;top:630px;width:187px;height:20px;background:#f0f0f0"></div>
<div class="t r" style="left:13px;width:28px;top:633px;">18</div>
<div class="t r" style="left:46px;width:55px;top:633px;">24704</div>
<div class="t r" style="left:105px;width:55px;top:633px;">632</div>
<div class="t " style="left:168px;top:633px;">1</div>
<div class="ab" style="left:15px;top:650px;width:187px;height:20px;background:#ffffff"></div>
<div class="t r" style="left:13px;width:28px;top:653px;">19</div>
<div class="t r" style="left:46px;width:55px;top:653px;">25336</div>
<div class="t r" style="left:105px;width:55px;top:653px;">484</div>
<div class="t " style="left:168px;top:653px;">0</div>
<div class="ab" style="left:15px;top:670px;width:187px;height:20px;background:#f0f0f0"></div>
<div class="t r" style="left:13px;width:28px;top:673px;">20</div>
<div class="t r" style="left:46px;width:55px;top:673px;">25820</div>
<div class="t r" style="left:105px;width:55px;top:673px;">648</div>
<div class="t " style="left:168px;top:673px;">1</div>
<div class="ab" style="left:15px;top:690px;width:187px;height:20px;background:#ffffff"></div>
<div class="t r" style="left:13px;width:28px;top:693px;">21</div>
<div class="t r" style="left:46px;width:55px;top:693px;">26468</div>
<div class="t r" style="left:105px;width:55px;top:693px;">1620</div>
<div class="t " style="left:168px;top:693px;">0</div>
<div class="ab" style="left:15px;top:710px;width:187px;height:20px;background:#f0f0f0"></div>
<div class="t r" style="left:13px;width:28px;top:713px;">22</div>
<div class="t r" style="left:46px;width:55px;top:713px;">28088</div>
<div class="t r" style="left:105px;width:55px;top:713px;">684</div>
<div class="t " style="left:168px;top:713px;">1</div>
<div class="ab" style="left:15px;top:730px;width:187px;height:20px;background:#ffffff"></div>
<div class="t r" style="left:13px;width:28px;top:733px;">23</div>
<div class="t r" style="left:46px;width:55px;top:733px;">28772</div>
<div class="t r" style="left:105px;width:55px;top:733px;">1568</div>
<div class="t " style="left:168px;top:733px;">0</div>
<div class="ab" style="left:15px;top:750px;width:187px;height:20px;background:#f0f0f0"></div>
<div class="t r" style="left:13px;width:28px;top:753px;">24</div>
<div class="t r" style="left:46px;width:55px;top:753px;">30340</div>
<div class="t r" style="left:105px;width:55px;top:753px;">648</div>
<div class="t " style="left:168px;top:753px;">1</div>
<div class="ab" style="left:15px;top:309px;width:187px;height:1px;background:#a0a0a0"></div>
<div class="ab" style="left:15px;top:329px;width:187px;height:1px;background:#a0a0a0"></div>
<div class="ab" style="left:15px;top:349px;width:187px;height:1px;background:#a0a0a0"></div>
<div class="ab" style="left:15px;top:369px;width:187px;height:1px;background:#a0a0a0"></div>
<div class="ab" style="left:15px;top:389px;width:187px;height:1px;background:#a0a0a0"></div>
<div class="ab" style="left:15px;top:409px;width:187px;height:1px;background:#a0a0a0"></div>
<div class="ab" style="left:15px;top:429px;width:187px;height:1px;background:#a0a0a0"></div>
<div class="ab" style="left:15px;top:449px;width:187px;height:1px;background:#a0a0a0"></div>
<div class="ab" style="left:15px;top:469px;width:187px;height:1px;background:#a0a0a0"></div>
<div class="ab" style="left:15px;top:489px;width:187px;height:1px;background:#a0a0a0"></div>
<div class="ab" style="left:15px;top:509px;width:187px;height:1px;background:#a0a0a0"></div>
<div class="ab" style="left:15px;top:529px;width:187px;height:1px;background:#a0a0a0"></div>
<div class="ab" style="left:15px;top:549px;width:187px;height:1px;background:#a0a0a0"></div>
<div class="ab" style="left:15px;top:569px;width:187px;height:1px;background:#a0a0a0"></div>
<div class="ab" style="left:15px;top:589px;width:187px;height:1px;background:#a0a0a0"></div>
<div class="ab" style="left:15px;top:609px;width:187px;height:1px;background:#a0a0a0"></div>
<div class="ab" style="left:15px;top:629px;width:187px;height:1px;background:#a0a0a0"></div>
<div class="ab" style="left:15px;top:649px;width:187px;height:1px;background:#a0a0a0"></div>
<div class="ab" style="left:15px;top:669px;width:187px;height:1px;background:#a0a0a0"></div>
<div class="ab" style="left:15px;top:689px;width:187px;height:1px;background:#a0a0a0"></div>
<div class="ab" style="left:15px;top:709px;width:187px;height:1px;background:#a0a0a0"></div>
<div class="ab" style="left:15px;top:729px;width:187px;height:1px;background:#a0a0a0"></div>
<div class="ab" style="left:15px;top:749px;width:187px;height:1px;background:#a0a0a0"></div>
<div class="ab" style="left:15px;top:769px;width:187px;height:1px;background:#a0a0a0"></div>
<div class="ab" style="left:46px;top:309px;width:1px;height:461px;background:#a0a0a0"></div>
<div class="ab" style="left:105px;top:309px;width:1px;height:461px;background:#a0a0a0"></div>
<div class="ab" style="left:164px;top:309px;width:1px;height:461px;background:#a0a0a0"></div>
<div class="ab" style="left:202px;top:309px;width:1px;height:461px;background:#a0a0a0"></div>
<div class="ab" style="left:203px;top:290px;width:17px;height:479px;background:linear-gradient(90deg,#e8e8e8,#f4f4f4 40%,#ececec)"></div>
<svg class="ab" style="left:206px;top:294px" width="11" height="8"><path d="M1.5 6 L5.5 2 L9.5 6 Z" fill="#505050"/></svg>
<svg class="ab" style="left:206px;top:756px" width="11" height="8"><path d="M2 2 L9 2 L5.5 6 Z" fill="#606060"/></svg>
<div class="ab" style="left:205px;top:312px;width:13px;height:106px;background:linear-gradient(90deg,#ececec,#d8d8d8 60%,#c8c8c8);border:1px solid #9a9a9a;border-radius:2px"></div>
<div class="ab" style="left:208px;top:360px;width:7px;height:1px;background:#555"></div>
<div class="ab" style="left:208px;top:363px;width:7px;height:1px;background:#555"></div>
<div class="ab" style="left:208px;top:366px;width:7px;height:1px;background:#555"></div>
<div class="ab" style="left:238px;top:269px;width:254px;height:149px;border:1px solid #d5dfe5;border-radius:3px"></div>
<div class="ab" style="left:243px;top:263px;width:54px;height:12px;background:#f0f0f0"></div>
<div class="t " style="left:245px;top:263px;">Channel 1</div>
<div class="ab" style="left:242px;top:279px;width:13px;height:13px;background:#f4f4f4;border:1px solid #8e8f8f"></div>
<div class="ab" style="left:244px;top:281px;width:9px;height:9px;background:linear-gradient(135deg,#cbcfd6,#e6e8eb 60%,#f6f6f6)"></div>
<svg class="ab" style="left:242px;top:279px" width="13" height="13"><path d="M3 6.5 L5.5 9.5 L10 3" stroke="#4a5f97" stroke-width="1.8" fill="none"/></svg>
<div class="t " style="left:260px;top:279px;">Overlay</div>
<div class="ab" style="left:242px;top:303px;width:13px;height:13px;background:#f4f4f4;border:1px solid #8e8f8f"></div>
<div class="ab" style="left:244px;top:305px;width:9px;height:9px;background:linear-gradient(135deg,#cbcfd6,#e6e8eb 60%,#f6f6f6)"></div>
<div class="t " style="left:260px;top:303px;">Invert</div>
<div class="ab" style="left:242px;top:327px;width:13px;height:13px;background:#f4f4f4;border:1px solid #8e8f8f"></div>
<div class="ab" style="left:244px;top:329px;width:9px;height:9px;background:linear-gradient(135deg,#cbcfd6,#e6e8eb 60%,#f6f6f6)"></div>
<div class="t " style="left:260px;top:327px;">Lock</div>
<div class="ab" style="left:242px;top:351px;width:13px;height:13px;background:#f4f4f4;border:1px solid #8e8f8f"></div>
<div class="ab" style="left:244px;top:353px;width:9px;height:9px;background:linear-gradient(135deg,#cbcfd6,#e6e8eb 60%,#f6f6f6)"></div>
<div class="t " style="left:260px;top:351px;">Beep</div>
<div class="ab" style="left:242px;top:375px;width:13px;height:13px;background:#f4f4f4;border:1px solid #8e8f8f"></div>
<div class="ab" style="left:244px;top:377px;width:9px;height:9px;background:linear-gradient(135deg,#cbcfd6,#e6e8eb 60%,#f6f6f6)"></div>
<div class="t " style="left:260px;top:375px;">Discrete</div>
<div class="ab" style="left:317px;top:278px;width:16px;height:16px;background:#fff"></div>
<div class="ab" style="left:317px;top:302px;width:16px;height:16px;background:#00ff00"></div>
<div class="ab" style="left:318px;top:334px;width:5px;height:8px;background:linear-gradient(90deg,#a0c020,#70a010)"></div>
<div class="ab" style="left:322px;top:326px;width:6px;height:16px;background:linear-gradient(90deg,#f08070,#d03020)"></div>
<div class="ab" style="left:328px;top:331px;width:4px;height:11px;background:linear-gradient(90deg,#60b0f0,#2080d0)"></div>
<div class="t" style="right:881px;top:278px;">Scale</div>
<div class="t" style="right:881px;top:302px;">Start</div>
<div class="t" style="right:881px;top:326px;">Measure</div>
<div class="t" style="right:881px;top:350px;">Cursor</div>
<div class="t" style="right:881px;top:374px;">Tolerance</div>
<div class="ab" style="left:420px;top:276px;width:41px;height:19px;background:#fff;border:1px solid #abadb3"></div>
<div class="t r" style="left:420px;width:22px;top:279px">10</div>
<div class="ab" style="left:445px;top:278px;width:14px;height:15px;background:linear-gradient(#f6f6f6,#e2e2e2);border:1px solid #b4b4b4"></div>
<div class="ab" style="left:446px;top:284px;width:12px;height:2px;background:#b8b8b8"></div>
<svg class="ab" style="left:445px;top:276px" width="14" height="19"><path d="M3.5 7.5 L7 4 L10.5 7.5 Z M3.5 11.5 L7 15 L10.5 11.5 Z" fill="#5a70b8"/></svg>
<div class="ab" style="left:420px;top:300px;width:41px;height:19px;background:#fff;border:1px solid #abadb3"></div>
<div class="t r" style="left:420px;width:22px;top:303px">1</div>
<div class="ab" style="left:445px;top:302px;width:14px;height:15px;background:linear-gradient(#f6f6f6,#e2e2e2);border:1px solid #b4b4b4"></div>
<div class="ab" style="left:446px;top:308px;width:12px;height:2px;background:#b8b8b8"></div>
<svg class="ab" style="left:445px;top:300px" width="14" height="19"><path d="M3.5 7.5 L7 4 L10.5 7.5 Z M3.5 11.5 L7 15 L10.5 11.5 Z" fill="#5a70b8"/></svg>
<div class="ab" style="left:404px;top:327px;width:13px;height:13px;background:#f4f4f4;border:1px solid #8e8f8f"></div>
<div class="ab" style="left:406px;top:329px;width:9px;height:9px;background:linear-gradient(135deg,#cbcfd6,#e6e8eb 60%,#f6f6f6)"></div>
<svg class="ab" style="left:404px;top:327px" width="13" height="13"><path d="M3 6.5 L5.5 9.5 L10 3" stroke="#4a5f97" stroke-width="1.8" fill="none"/></svg>
<div class="ab" style="left:420px;top:324px;width:42px;height:19px;background:#fff;border:1px solid #e3e9ef;border-top-color:#abadb3;border-radius:2px"></div>
<div class="t r" style="left:420px;width:39px;top:326px">94.900</div>
<div class="t " style="left:471px;top:326px;">µS</div>
<div class="ab" style="left:404px;top:351px;width:13px;height:13px;background:#f4f4f4;border:1px solid #8e8f8f"></div>
<div class="ab" style="left:406px;top:353px;width:9px;height:9px;background:linear-gradient(135deg,#cbcfd6,#e6e8eb 60%,#f6f6f6)"></div>
<div class="ab" style="left:420px;top:348px;width:42px;height:18px;background:#fff;border:1px solid #e3e9ef;border-top-color:#abadb3;border-radius:2px"></div>
<div class="t r" style="left:420px;width:39px;top:350px">0</div>
<div class="t " style="left:471px;top:350px;">µS</div>
<div class="ab" style="left:419px;top:378px;width:42px;height:3px;background:linear-gradient(#a8a8a8 0,#a8a8a8 1px,#f4f4f4 1px,#ffffff 100%);border-left:1px solid #b8b8b8;border-right:1px solid #e8e8e8"></div>
<svg class="ab" style="left:437px;top:376px" width="7" height="10"><path d="M1 0.5 H5.5 V5.5 L3.2 8.5 L1 5.5 Z" fill="#f2f2f2" stroke="#8a8a8a" stroke-width="1"/></svg>
<svg class="ab" style="left:421px;top:387px" width="42" height="3"><rect x="0" y="0" width="1" height="3" fill="#a8a8a8"/><rect x="2" y="0" width="1" height="3" fill="#a8a8a8"/><rect x="4" y="0" width="1" height="3" fill="#a8a8a8"/><rect x="6" y="0" width="1" height="3" fill="#a8a8a8"/><rect x="8" y="0" width="1" height="3" fill="#a8a8a8"/><rect x="10" y="0" width="1" height="3" fill="#a8a8a8"/><rect x="12" y="0" width="1" height="3" fill="#a8a8a8"/><rect x="14" y="0" width="1" height="3" fill="#a8a8a8"/><rect x="16" y="0" width="1" height="3" fill="#a8a8a8"/><rect x="18" y="0" width="1" height="3" fill="#a8a8a8"/><rect x="20" y="0" width="1" height="3" fill="#a8a8a8"/><rect x="22" y="0" width="1" height="3" fill="#a8a8a8"/><rect x="24" y="0" width="1" height="3" fill="#a8a8a8"/><rect x="26" y="0" width="1" height="3" fill="#a8a8a8"/><rect x="28" y="0" width="1" height="3" fill="#a8a8a8"/><rect x="30" y="0" width="1" height="3" fill="#a8a8a8"/><rect x="32" y="0" width="1" height="3" fill="#a8a8a8"/><rect x="34" y="0" width="1" height="3" fill="#a8a8a8"/><rect x="36" y="0" width="1" height="3" fill="#a8a8a8"/><rect x="38" y="0" width="1" height="3" fill="#a8a8a8"/></svg>
<div class="ab" style="left:255px;top:394px;width:39px;height:21px;background:linear-gradient(#f2f2f2 0%,#ebebeb 50%,#dddddd 51%,#cfcfcf 100%);border:1px solid #707070;border-radius:3px"></div>
<div class="t c" style="left:255px;width:39px;top:398px;">Clear</div>
<div class="ab" style="left:325px;top:394px;width:75px;height:21px;background:linear-gradient(#f2f2f2 0%,#ebebeb 50%,#dddddd 51%,#cfcfcf 100%);border:1px solid #707070;border-radius:3px"></div>
<div class="t c" style="left:325px;width:75px;top:398px;">Copy to CH2</div>
<div class="ab" style="left:415px;top:394px;width:52px;height:21px;background:linear-gradient(#f2f2f2 0%,#ebebeb 50%,#dddddd 51%,#cfcfcf 100%);border:1px solid #707070;border-radius:3px"></div>
<div class="t c" style="left:415px;width:52px;top:398px;">Analyse</div>
<div class="ab" style="left:238px;top:433px;width:254px;height:149px;border:1px solid #d5dfe5;border-radius:3px"></div>
<div class="ab" style="left:243px;top:427px;width:54px;height:12px;background:#f0f0f0"></div>
<div class="t " style="left:245px;top:427px;">Channel 2</div>
<div class="ab" style="left:242px;top:443px;width:13px;height:13px;background:#f4f4f4;border:1px solid #8e8f8f"></div>
<div class="ab" style="left:244px;top:445px;width:9px;height:9px;background:linear-gradient(135deg,#cbcfd6,#e6e8eb 60%,#f6f6f6)"></div>
<div class="t " style="left:260px;top:443px;">Overlay</div>
<div class="ab" style="left:242px;top:467px;width:13px;height:13px;background:#f4f4f4;border:1px solid #8e8f8f"></div>
<div class="ab" style="left:244px;top:469px;width:9px;height:9px;background:linear-gradient(135deg,#cbcfd6,#e6e8eb 60%,#f6f6f6)"></div>
<div class="t " style="left:260px;top:467px;">Invert</div>
<div class="ab" style="left:242px;top:491px;width:13px;height:13px;background:#f4f4f4;border:1px solid #8e8f8f"></div>
<div class="ab" style="left:244px;top:493px;width:9px;height:9px;background:linear-gradient(135deg,#cbcfd6,#e6e8eb 60%,#f6f6f6)"></div>
<div class="t " style="left:260px;top:491px;">Lock</div>
<div class="ab" style="left:242px;top:515px;width:13px;height:13px;background:#f4f4f4;border:1px solid #8e8f8f"></div>
<div class="ab" style="left:244px;top:517px;width:9px;height:9px;background:linear-gradient(135deg,#cbcfd6,#e6e8eb 60%,#f6f6f6)"></div>
<div class="t " style="left:260px;top:515px;">Beep</div>
<div class="ab" style="left:242px;top:539px;width:13px;height:13px;background:#f4f4f4;border:1px solid #8e8f8f"></div>
<div class="ab" style="left:244px;top:541px;width:9px;height:9px;background:linear-gradient(135deg,#cbcfd6,#e6e8eb 60%,#f6f6f6)"></div>
<div class="t " style="left:260px;top:539px;">Discrete</div>
<div class="ab" style="left:317px;top:442px;width:16px;height:16px;background:#fff"></div>
<div class="ab" style="left:317px;top:466px;width:16px;height:16px;background:#ffff00"></div>
<div class="ab" style="left:318px;top:498px;width:5px;height:8px;background:linear-gradient(90deg,#a0c020,#70a010)"></div>
<div class="ab" style="left:322px;top:490px;width:6px;height:16px;background:linear-gradient(90deg,#f08070,#d03020)"></div>
<div class="ab" style="left:328px;top:495px;width:4px;height:11px;background:linear-gradient(90deg,#60b0f0,#2080d0)"></div>
<div class="t" style="right:881px;top:442px;">Scale</div>
<div class="t" style="right:881px;top:466px;">Start</div>
<div class="t" style="right:881px;top:490px;">Measure</div>
<div class="t" style="right:881px;top:514px;">Cursor</div>
<div class="t" style="right:881px;top:538px;">Tolerance</div>
<div class="ab" style="left:420px;top:440px;width:41px;height:19px;background:#fff;border:1px solid #abadb3"></div>
<div class="t r" style="left:420px;width:22px;top:443px">10</div>
<div class="ab" style="left:445px;top:442px;width:14px;height:15px;background:linear-gradient(#f6f6f6,#e2e2e2);border:1px solid #b4b4b4"></div>
<div class="ab" style="left:446px;top:448px;width:12px;height:2px;background:#b8b8b8"></div>
<svg class="ab" style="left:445px;top:440px" width="14" height="19"><path d="M3.5 7.5 L7 4 L10.5 7.5 Z M3.5 11.5 L7 15 L10.5 11.5 Z" fill="#5a70b8"/></svg>
<div class="ab" style="left:420px;top:464px;width:41px;height:19px;background:#fff;border:1px solid #abadb3"></div>
<div class="t r" style="left:420px;width:22px;top:467px">1</div>
<div class="ab" style="left:445px;top:466px;width:14px;height:15px;background:linear-gradient(#f6f6f6,#e2e2e2);border:1px solid #b4b4b4"></div>
<div class="ab" style="left:446px;top:472px;width:12px;height:2px;background:#b8b8b8"></div>
<svg class="ab" style="left:445px;top:464px" width="14" height="19"><path d="M3.5 7.5 L7 4 L10.5 7.5 Z M3.5 11.5 L7 15 L10.5 11.5 Z" fill="#5a70b8"/></svg>
<div class="ab" style="left:404px;top:491px;width:13px;height:13px;background:#f4f4f4;border:1px solid #8e8f8f"></div>
<div class="ab" style="left:406px;top:493px;width:9px;height:9px;background:linear-gradient(135deg,#cbcfd6,#e6e8eb 60%,#f6f6f6)"></div>
<div class="ab" style="left:420px;top:488px;width:42px;height:19px;background:#fff;border:1px solid #e3e9ef;border-top-color:#abadb3;border-radius:2px"></div>
<div class="t r" style="left:420px;width:39px;top:490px">0</div>
<div class="t " style="left:471px;top:490px;">µS</div>
<div class="ab" style="left:404px;top:515px;width:13px;height:13px;background:#f4f4f4;border:1px solid #8e8f8f"></div>
<div class="ab" style="left:406px;top:517px;width:9px;height:9px;background:linear-gradient(135deg,#cbcfd6,#e6e8eb 60%,#f6f6f6)"></div>
<div class="ab" style="left:420px;top:512px;width:42px;height:18px;background:#fff;border:1px solid #e3e9ef;border-top-color:#abadb3;border-radius:2px"></div>
<div class="t r" style="left:420px;width:39px;top:514px">0</div>
<div class="t " style="left:471px;top:514px;">µS</div>
<div class="ab" style="left:419px;top:542px;width:42px;height:3px;background:linear-gradient(#a8a8a8 0,#a8a8a8 1px,#f4f4f4 1px,#ffffff 100%);border-left:1px solid #b8b8b8;border-right:1px solid #e8e8e8"></div>
<svg class="ab" style="left:437px;top:540px" width="7" height="10"><path d="M1 0.5 H5.5 V5.5 L3.2 8.5 L1 5.5 Z" fill="#f2f2f2" stroke="#8a8a8a" stroke-width="1"/></svg>
<svg class="ab" style="left:421px;top:551px" width="42" height="3"><rect x="0" y="0" width="1" height="3" fill="#a8a8a8"/><rect x="2" y="0" width="1" height="3" fill="#a8a8a8"/><rect x="4" y="0" width="1" height="3" fill="#a8a8a8"/><rect x="6" y="0" width="1" height="3" fill="#a8a8a8"/><rect x="8" y="0" width="1" height="3" fill="#a8a8a8"/><rect x="10" y="0" width="1" height="3" fill="#a8a8a8"/><rect x="12" y="0" width="1" height="3" fill="#a8a8a8"/><rect x="14" y="0" width="1" height="3" fill="#a8a8a8"/><rect x="16" y="0" width="1" height="3" fill="#a8a8a8"/><rect x="18" y="0" width="1" height="3" fill="#a8a8a8"/><rect x="20" y="0" width="1" height="3" fill="#a8a8a8"/><rect x="22" y="0" width="1" height="3" fill="#a8a8a8"/><rect x="24" y="0" width="1" height="3" fill="#a8a8a8"/><rect x="26" y="0" width="1" height="3" fill="#a8a8a8"/><rect x="28" y="0" width="1" height="3" fill="#a8a8a8"/><rect x="30" y="0" width="1" height="3" fill="#a8a8a8"/><rect x="32" y="0" width="1" height="3" fill="#a8a8a8"/><rect x="34" y="0" width="1" height="3" fill="#a8a8a8"/><rect x="36" y="0" width="1" height="3" fill="#a8a8a8"/><rect x="38" y="0" width="1" height="3" fill="#a8a8a8"/></svg>
<div class="ab" style="left:255px;top:558px;width:39px;height:21px;background:linear-gradient(#f2f2f2 0%,#ebebeb 50%,#dddddd 51%,#cfcfcf 100%);border:1px solid #707070;border-radius:3px"></div>
<div class="t c" style="left:255px;width:39px;top:562px;">Clear</div>
<div class="ab" style="left:325px;top:558px;width:75px;height:21px;background:linear-gradient(#f2f2f2 0%,#ebebeb 50%,#dddddd 51%,#cfcfcf 100%);border:1px solid #707070;border-radius:3px"></div>
<div class="t c" style="left:325px;width:75px;top:562px;">Copy to CH1</div>
<div class="ab" style="left:415px;top:558px;width:52px;height:21px;background:linear-gradient(#f2f2f2 0%,#ebebeb 50%,#dddddd 51%,#cfcfcf 100%);border:1px solid #707070;border-radius:3px"></div>
<div class="t c" style="left:415px;width:52px;top:562px;">Analyse</div>
<div class="ab" style="left:505px;top:269px;width:601px;height:504px;border:1px solid #d5dfe5;border-radius:3px"></div>
<div class="ab" style="left:511px;top:262px;width:150px;height:12px;background:#f0f0f0"></div>
<div class="t " style="left:514px;top:263px;">Session History: moreTV_Teil1</div>
<div class="t " style="left:1039px;top:271px;">21 Signals</div>
<div class="ab" style="left:512px;top:283px;width:588px;height:489px;background:#fff;border:1px solid #000;box-shadow:inset 0 0 0 1px #e3e3e3,0 0 0 1px #fff"></div>
<div class="ab" style="left:514px;top:285px;width:584.5px;height:19px;background:linear-gradient(#ffffff 0%,#ffffff 45%,#f3f4f6 50%,#f1f2f4 100%)"></div>
<div class="ab" style="left:514px;top:303px;width:584.5px;height:1px;background:#e6e6e6"></div>
<div class="ab" style="left:541px;top:285px;width:1px;height:19px;background:#e2e4e7"></div>
<div class="ab" style="left:600px;top:285px;width:1px;height:19px;background:#e2e4e7"></div>
<div class="ab" style="left:637px;top:285px;width:1px;height:19px;background:#e2e4e7"></div>
<div class="ab" style="left:727px;top:285px;width:1px;height:19px;background:#e2e4e7"></div>
<div class="ab" style="left:788px;top:285px;width:1px;height:19px;background:#e2e4e7"></div>
<div class="ab" style="left:834px;top:285px;width:1px;height:19px;background:#e2e4e7"></div>
<div class="ab" style="left:864px;top:285px;width:1px;height:19px;background:#e2e4e7"></div>
<div class="ab" style="left:926px;top:285px;width:1px;height:19px;background:#e2e4e7"></div>
<div class="ab" style="left:1009px;top:285px;width:1px;height:19px;background:#e2e4e7"></div>
<div class="ab" style="left:1055px;top:285px;width:1px;height:19px;background:#e2e4e7"></div>
<div class="t c" style="left:512px;width:29px;top:288px;">CH</div>
<div class="t c" style="left:541px;width:59px;top:288px;">Time</div>
<div class="t c" style="left:600px;width:37px;top:288px;">Type</div>
<div class="t c" style="left:637px;width:90px;top:288px;">Button</div>
<div class="t c" style="left:727px;width:61px;top:288px;">Value</div>
<div class="t c" style="left:788px;width:46px;top:288px;">Value2</div>
<div class="t c" style="left:834px;width:30px;top:288px;">Bits</div>
<div class="t c" style="left:864px;width:62px;top:288px;">Date</div>
<div class="t c" style="left:926px;width:83px;top:288px;">Data</div>
<div class="t c" style="left:1009px;width:46px;top:288px;">Toggle</div>
<div class="t c" style="left:1055px;width:43px;top:288px;">Carrier</div>
<div class="ab" style="left:514px;top:305px;width:584.5px;height:20px;background:#ffffff"></div>
<div class="t r" style="left:512px;width:24px;top:308px;">1</div>
<div class="t " style="left:545px;top:308px;">19:16:00.0</div>
<div class="t r" style="left:600px;width:32px;top:308px;">NEC</div>
<div class="t r" style="left:637px;width:86px;top:308px;">VOL-</div>
<div class="t c" style="left:727px;width:61px;top:308px;">22D6F00F</div>
<div class="t r" style="left:788px;width:42px;top:308px;"></div>
<div class="t r" style="left:834px;width:25px;top:308px;">32</div>
<div class="t " style="left:868px;top:308px;">05.10.2025</div>
<div class="t " style="left:930px;top:308px;">1;0;1000;0|2;...</div>
<div class="t r" style="left:1009px;width:42px;top:308px;"></div>
<div class="t r" style="left:1055px;width:38px;top:308px;">37750</div>
<div class="ab" style="left:514px;top:325px;width:584.5px;height:20px;background:#f0f0f0"></div>
<div class="t r" style="left:512px;width:24px;top:328px;">1</div>
<div class="t " style="left:545px;top:328px;">19:15:51.6</div>
<div class="t r" style="left:600px;width:32px;top:328px;">NEC</div>
<div class="t r" style="left:637px;width:86px;top:328px;">VOL+</div>
<div class="t c" style="left:727px;width:61px;top:328px;">22D6F807</div>
<div class="t r" style="left:788px;width:42px;top:328px;"></div>
<div class="t r" style="left:834px;width:25px;top:328px;">32</div>
<div class="t " style="left:868px;top:328px;">05.10.2025</div>
<div class="t " style="left:930px;top:328px;">1;0;1000;0|2;...</div>
<div class="t r" style="left:1009px;width:42px;top:328px;"></div>
<div class="t r" style="left:1055px;width:38px;top:328px;">37760</div>
<div class="ab" style="left:514px;top:345px;width:584.5px;height:20px;background:#ffffff"></div>
<div class="t r" style="left:512px;width:24px;top:348px;">1</div>
<div class="t " style="left:545px;top:348px;">19:15:43.7</div>
<div class="t r" style="left:600px;width:32px;top:348px;">NEC</div>
<div class="t r" style="left:637px;width:86px;top:348px;">CH-</div>
<div class="t c" style="left:727px;width:61px;top:348px;">22D6E817</div>
<div class="t r" style="left:788px;width:42px;top:348px;"></div>
<div class="t r" style="left:834px;width:25px;top:348px;">32</div>
<div class="t " style="left:868px;top:348px;">05.10.2025</div>
<div class="t " style="left:930px;top:348px;">1;0;1000;0|2;...</div>
<div class="t r" style="left:1009px;width:42px;top:348px;"></div>
<div class="t r" style="left:1055px;width:38px;top:348px;">37750</div>
<div class="ab" style="left:514px;top:365px;width:584.5px;height:20px;background:#f0f0f0"></div>
<div class="t r" style="left:512px;width:24px;top:368px;">1</div>
<div class="t " style="left:545px;top:368px;">19:15:31.7</div>
<div class="t r" style="left:600px;width:32px;top:368px;">NEC</div>
<div class="t r" style="left:637px;width:86px;top:368px;">CH+</div>
<div class="t c" style="left:727px;width:61px;top:368px;">22D60AF5</div>
<div class="t r" style="left:788px;width:42px;top:368px;"></div>
<div class="t r" style="left:834px;width:25px;top:368px;">32</div>
<div class="t " style="left:868px;top:368px;">05.10.2025</div>
<div class="t " style="left:930px;top:368px;">1;0;1000;0|2;...</div>
<div class="t r" style="left:1009px;width:42px;top:368px;"></div>
<div class="t r" style="left:1055px;width:38px;top:368px;">37760</div>
<div class="ab" style="left:514px;top:385px;width:584.5px;height:20px;background:#ffffff"></div>
<div class="t r" style="left:512px;width:24px;top:388px;">1</div>
<div class="t " style="left:545px;top:388px;">19:15:23.8</div>
<div class="t r" style="left:600px;width:32px;top:388px;">NEC</div>
<div class="t r" style="left:637px;width:86px;top:388px;">Mute</div>
<div class="t c" style="left:727px;width:61px;top:388px;">22D6A05F</div>
<div class="t r" style="left:788px;width:42px;top:388px;"></div>
<div class="t r" style="left:834px;width:25px;top:388px;">32</div>
<div class="t " style="left:868px;top:388px;">05.10.2025</div>
<div class="t " style="left:930px;top:388px;">1;0;1000;0|2;...</div>
<div class="t r" style="left:1009px;width:42px;top:388px;"></div>
<div class="t r" style="left:1055px;width:38px;top:388px;">37770</div>
<div class="ab" style="left:514px;top:405px;width:584.5px;height:20px;background:#f0f0f0"></div>
<div class="t r" style="left:512px;width:24px;top:408px;">1</div>
<div class="t " style="left:545px;top:408px;">19:15:10.3</div>
<div class="t r" style="left:600px;width:32px;top:408px;">NEC</div>
<div class="t r" style="left:637px;width:86px;top:408px;">MORE</div>
<div class="t c" style="left:727px;width:61px;top:408px;">22D602FD</div>
<div class="t r" style="left:788px;width:42px;top:408px;"></div>
<div class="t r" style="left:834px;width:25px;top:408px;">32</div>
<div class="t " style="left:868px;top:408px;">05.10.2025</div>
<div class="t " style="left:930px;top:408px;">1;0;1000;0|2;...</div>
<div class="t r" style="left:1009px;width:42px;top:408px;"></div>
<div class="t r" style="left:1055px;width:38px;top:408px;">37760</div>
<div class="ab" style="left:514px;top:425px;width:584.5px;height:20px;background:#ffffff"></div>
<div class="t r" style="left:512px;width:24px;top:428px;">1</div>
<div class="t " style="left:545px;top:428px;">19:15:01.5</div>
<div class="t r" style="left:600px;width:32px;top:428px;">NEC</div>
<div class="t r" style="left:637px;width:86px;top:428px;">Right</div>
<div class="t c" style="left:727px;width:61px;top:428px;">22D6C837</div>
<div class="t r" style="left:788px;width:42px;top:428px;"></div>
<div class="t r" style="left:834px;width:25px;top:428px;">32</div>
<div class="t " style="left:868px;top:428px;">05.10.2025</div>
<div class="t " style="left:930px;top:428px;">1;0;1000;0|2;...</div>
<div class="t r" style="left:1009px;width:42px;top:428px;"></div>
<div class="t r" style="left:1055px;width:38px;top:428px;">37760</div>
<div class="ab" style="left:514px;top:445px;width:584.5px;height:20px;background:#f0f0f0"></div>
<div class="t r" style="left:512px;width:24px;top:448px;">1</div>
<div class="t " style="left:545px;top:448px;">19:14:55.8</div>
<div class="t r" style="left:600px;width:32px;top:448px;">NEC</div>
<div class="t r" style="left:637px;width:86px;top:448px;">Left</div>
<div class="t c" style="left:727px;width:61px;top:448px;">22D6D827</div>
<div class="t r" style="left:788px;width:42px;top:448px;"></div>
<div class="t r" style="left:834px;width:25px;top:448px;">32</div>
<div class="t " style="left:868px;top:448px;">05.10.2025</div>
<div class="t " style="left:930px;top:448px;">1;0;1000;0|2;...</div>
<div class="t r" style="left:1009px;width:42px;top:448px;"></div>
<div class="t r" style="left:1055px;width:38px;top:448px;">37770</div>
<div class="ab" style="left:514px;top:465px;width:584.5px;height:20px;background:#ffffff"></div>
<div class="t r" style="left:512px;width:24px;top:468px;">1</div>
<div class="t " style="left:545px;top:468px;">19:14:48.6</div>
<div class="t r" style="left:600px;width:32px;top:468px;">NEC</div>
<div class="t r" style="left:637px;width:86px;top:468px;">Down</div>
<div class="t c" style="left:727px;width:61px;top:468px;">22D6708F</div>
<div class="t r" style="left:788px;width:42px;top:468px;"></div>
<div class="t r" style="left:834px;width:25px;top:468px;">32</div>
<div class="t " style="left:868px;top:468px;">05.10.2025</div>
<div class="t " style="left:930px;top:468px;">1;0;1000;0|2;...</div>
<div class="t r" style="left:1009px;width:42px;top:468px;"></div>
<div class="t r" style="left:1055px;width:38px;top:468px;">37750</div>
<div class="ab" style="left:514px;top:485px;width:584.5px;height:20px;background:#f0f0f0"></div>
<div class="t r" style="left:512px;width:24px;top:488px;">1</div>
<div class="t " style="left:545px;top:488px;">19:14:39.1</div>
<div class="t r" style="left:600px;width:32px;top:488px;">NEC</div>
<div class="t r" style="left:637px;width:86px;top:488px;">Up</div>
<div class="t c" style="left:727px;width:61px;top:488px;">22D69867</div>
<div class="t r" style="left:788px;width:42px;top:488px;"></div>
<div class="t r" style="left:834px;width:25px;top:488px;">32</div>
<div class="t " style="left:868px;top:488px;">05.10.2025</div>
<div class="t " style="left:930px;top:488px;">1;0;1000;0|2;...</div>
<div class="t r" style="left:1009px;width:42px;top:488px;"></div>
<div class="t r" style="left:1055px;width:38px;top:488px;">37770</div>
<div class="ab" style="left:514px;top:505px;width:584.5px;height:20px;background:#ffffff"></div>
<div class="t r" style="left:512px;width:24px;top:508px;">1</div>
<div class="t " style="left:545px;top:508px;">19:14:25.9</div>
<div class="t r" style="left:600px;width:32px;top:508px;">NEC</div>
<div class="t r" style="left:637px;width:86px;top:508px;">Info</div>
<div class="t c" style="left:727px;width:61px;top:508px;">22D6C03F</div>
<div class="t r" style="left:788px;width:42px;top:508px;"></div>
<div class="t r" style="left:834px;width:25px;top:508px;">32</div>
<div class="t " style="left:868px;top:508px;">05.10.2025</div>
<div class="t " style="left:930px;top:508px;">1;0;1000;0|2;...</div>
<div class="t r" style="left:1009px;width:42px;top:508px;"></div>
<div class="t r" style="left:1055px;width:38px;top:508px;">37780</div>
<div class="ab" style="left:514px;top:525px;width:584.5px;height:20px;background:#f0f0f0"></div>
<div class="t r" style="left:512px;width:24px;top:528px;">1</div>
<div class="t " style="left:545px;top:528px;">19:14:16.8</div>
<div class="t r" style="left:600px;width:32px;top:528px;">NEC</div>
<div class="t r" style="left:637px;width:86px;top:528px;">OK</div>
<div class="t c" style="left:727px;width:61px;top:528px;">22D6E01F</div>
<div class="t r" style="left:788px;width:42px;top:528px;"></div>
<div class="t r" style="left:834px;width:25px;top:528px;">32</div>
<div class="t " style="left:868px;top:528px;">05.10.2025</div>
<div class="t " style="left:930px;top:528px;">1;0;1000;0|2;...</div>
<div class="t r" style="left:1009px;width:42px;top:528px;"></div>
<div class="t r" style="left:1055px;width:38px;top:528px;">37760</div>
<div class="ab" style="left:514px;top:545px;width:584.5px;height:20px;background:#ffffff"></div>
<div class="t r" style="left:512px;width:24px;top:548px;">1</div>
<div class="t " style="left:545px;top:548px;">19:13:53.7</div>
<div class="t r" style="left:600px;width:32px;top:548px;">NEC</div>
<div class="t r" style="left:637px;width:86px;top:548px;">Exit</div>
<div class="t c" style="left:727px;width:61px;top:548px;">22D6807F</div>
<div class="t r" style="left:788px;width:42px;top:548px;"></div>
<div class="t r" style="left:834px;width:25px;top:548px;">32</div>
<div class="t " style="left:868px;top:548px;">05.10.2025</div>
<div class="t " style="left:930px;top:548px;">1;0;1000;0|2;...</div>
<div class="t r" style="left:1009px;width:42px;top:548px;"></div>
<div class="t r" style="left:1055px;width:38px;top:548px;">37790</div>
<div class="ab" style="left:514px;top:565px;width:584.5px;height:20px;background:#f0f0f0"></div>
<div class="t r" style="left:512px;width:24px;top:568px;">1</div>
<div class="t " style="left:545px;top:568px;">19:13:23.3</div>
<div class="t r" style="left:600px;width:32px;top:568px;">NEC</div>
<div class="t r" style="left:637px;width:86px;top:568px;">MAIL (blue)</div>
<div class="t c" style="left:727px;width:61px;top:568px;">22D65AA5</div>
<div class="t r" style="left:788px;width:42px;top:568px;"></div>
<div class="t r" style="left:834px;width:25px;top:568px;">32</div>
<div class="t " style="left:868px;top:568px;">05.10.2025</div>
<div class="t " style="left:930px;top:568px;">1;0;1000;0|2;...</div>
<div class="t r" style="left:1009px;width:42px;top:568px;"></div>
<div class="t r" style="left:1055px;width:38px;top:568px;">37780</div>
<div class="ab" style="left:514px;top:585px;width:584.5px;height:20px;background:#ffffff"></div>
<div class="t r" style="left:512px;width:24px;top:588px;">1</div>
<div class="t " style="left:545px;top:588px;">19:12:58.3</div>
<div class="t r" style="left:600px;width:32px;top:588px;">NEC</div>
<div class="t r" style="left:637px;width:86px;top:588px;">OPT (yellow)</div>
<div class="t c" style="left:727px;width:61px;top:588px;">22D658A7</div>
<div class="t r" style="left:788px;width:42px;top:588px;"></div>
<div class="t r" style="left:834px;width:25px;top:588px;">32</div>
<div class="t " style="left:868px;top:588px;">05.10.2025</div>
<div class="t " style="left:930px;top:588px;">1;0;1000;0|2;...</div>
<div class="t r" style="left:1009px;width:42px;top:588px;"></div>
<div class="t r" style="left:1055px;width:38px;top:588px;">37770</div>
<div class="ab" style="left:514px;top:605px;width:584.5px;height:20px;background:#f0f0f0"></div>
<div class="t r" style="left:512px;width:24px;top:608px;">1</div>
<div class="t " style="left:545px;top:608px;">19:12:38.7</div>
<div class="t r" style="left:600px;width:32px;top:608px;">NEC</div>
<div class="t r" style="left:637px;width:86px;top:608px;">SERVICE (green)</div>
<div class="t c" style="left:727px;width:61px;top:608px;">22D652AD</div>
<div class="t r" style="left:788px;width:42px;top:608px;"></div>
<div class="t r" style="left:834px;width:25px;top:608px;">32</div>
<div class="t " style="left:868px;top:608px;">05.10.2025</div>
<div class="t " style="left:930px;top:608px;">1;0;1000;0|2;...</div>
<div class="t r" style="left:1009px;width:42px;top:608px;"></div>
<div class="t r" style="left:1055px;width:38px;top:608px;">37780</div>
<div class="ab" style="left:514px;top:625px;width:584.5px;height:20px;background:#3399ff"></div>
<div class="t r" style="left:512px;width:24px;top:628px;color:#fff;">1</div>
<div class="t " style="left:545px;top:628px;color:#fff;">19:12:22.3</div>
<div class="t r" style="left:600px;width:32px;top:628px;color:#fff;">NEC</div>
<div class="t r" style="left:637px;width:86px;top:628px;color:#fff;">VOD(red)</div>
<div class="t c" style="left:727px;width:61px;top:628px;color:#fff;">22D67887</div>
<div class="t r" style="left:788px;width:42px;top:628px;color:#fff;"></div>
<div class="t r" style="left:834px;width:25px;top:628px;color:#fff;">32</div>
<div class="t " style="left:868px;top:628px;color:#fff;">05.10.2025</div>
<div class="t " style="left:930px;top:628px;color:#fff;">1;0;1000;0|2;...</div>
<div class="t r" style="left:1009px;width:42px;top:628px;color:#fff;"></div>
<div class="t r" style="left:1055px;width:38px;top:628px;color:#fff;">37760</div>
<div class="ab" style="left:514px;top:645px;width:584.5px;height:20px;background:#f0f0f0"></div>
<div class="t r" style="left:512px;width:24px;top:648px;">1</div>
<div class="t " style="left:545px;top:648px;">19:12:02.9</div>
<div class="t r" style="left:600px;width:32px;top:648px;">NEC</div>
<div class="t r" style="left:637px;width:86px;top:648px;">MARKER</div>
<div class="t c" style="left:727px;width:61px;top:648px;">22D6D02F</div>
<div class="t r" style="left:788px;width:42px;top:648px;"></div>
<div class="t r" style="left:834px;width:25px;top:648px;">32</div>
<div class="t " style="left:868px;top:648px;">05.10.2025</div>
<div class="t " style="left:930px;top:648px;">1;0;1000;0|2;...</div>
<div class="t r" style="left:1009px;width:42px;top:648px;"></div>
<div class="t r" style="left:1055px;width:38px;top:648px;">37770</div>
<div class="ab" style="left:514px;top:665px;width:584.5px;height:20px;background:#ffffff"></div>
<div class="t r" style="left:512px;width:24px;top:668px;">1</div>
<div class="t " style="left:545px;top:668px;">19:11:31.1</div>
<div class="t r" style="left:600px;width:32px;top:668px;">NEC</div>
<div class="t r" style="left:637px;width:86px;top:668px;">ARCHIV</div>
<div class="t c" style="left:727px;width:61px;top:668px;">22D6A857</div>
<div class="t r" style="left:788px;width:42px;top:668px;"></div>
<div class="t r" style="left:834px;width:25px;top:668px;">32</div>
<div class="t " style="left:868px;top:668px;">05.10.2025</div>
<div class="t " style="left:930px;top:668px;">1;0;1000;0|2;...</div>
<div class="t r" style="left:1009px;width:42px;top:668px;"></div>
<div class="t r" style="left:1055px;width:38px;top:668px;">37780</div>
<div class="ab" style="left:514px;top:685px;width:584.5px;height:20px;background:#f0f0f0"></div>
<div class="t r" style="left:512px;width:24px;top:688px;">1</div>
<div class="t " style="left:545px;top:688px;">19:11:17.4</div>
<div class="t r" style="left:600px;width:32px;top:688px;">NEC</div>
<div class="t r" style="left:637px;width:86px;top:688px;">EPG</div>
<div class="t c" style="left:727px;width:61px;top:688px;">22D632CD</div>
<div class="t r" style="left:788px;width:42px;top:688px;"></div>
<div class="t r" style="left:834px;width:25px;top:688px;">32</div>
<div class="t " style="left:868px;top:688px;">05.10.2025</div>
<div class="t " style="left:930px;top:688px;">1;0;1000;0|2;...</div>
<div class="t r" style="left:1009px;width:42px;top:688px;"></div>
<div class="t r" style="left:1055px;width:38px;top:688px;">37770</div>
<div class="ab" style="left:514px;top:705px;width:584.5px;height:20px;background:#ffffff"></div>
<div class="t r" style="left:512px;width:24px;top:708px;">1</div>
<div class="t " style="left:545px;top:708px;">19:11:00.6</div>
<div class="t r" style="left:600px;width:32px;top:708px;">NEC</div>
<div class="t r" style="left:637px;width:86px;top:708px;">Power</div>
<div class="t c" style="left:727px;width:61px;top:708px;">22D64AB5</div>
<div class="t r" style="left:788px;width:42px;top:708px;"></div>
<div class="t r" style="left:834px;width:25px;top:708px;">32</div>
<div class="t " style="left:868px;top:708px;">05.10.2025</div>
<div class="t " style="left:930px;top:708px;">1;0;1000;0|2;...</div>
<div class="t r" style="left:1009px;width:42px;top:708px;"></div>
<div class="t r" style="left:1055px;width:38px;top:708px;">37770</div>
<div class="ab" style="left:514px;top:304px;width:584.5px;height:1px;background:#a0a0a0"></div>
<div class="ab" style="left:514px;top:324px;width:584.5px;height:1px;background:#a0a0a0"></div>
<div class="ab" style="left:514px;top:344px;width:584.5px;height:1px;background:#a0a0a0"></div>
<div class="ab" style="left:514px;top:364px;width:584.5px;height:1px;background:#a0a0a0"></div>
<div class="ab" style="left:514px;top:384px;width:584.5px;height:1px;background:#a0a0a0"></div>
<div class="ab" style="left:514px;top:404px;width:584.5px;height:1px;background:#a0a0a0"></div>
<div class="ab" style="left:514px;top:424px;width:584.5px;height:1px;background:#a0a0a0"></div>
<div class="ab" style="left:514px;top:444px;width:584.5px;height:1px;background:#a0a0a0"></div>
<div class="ab" style="left:514px;top:464px;width:584.5px;height:1px;background:#a0a0a0"></div>
<div class="ab" style="left:514px;top:484px;width:584.5px;height:1px;background:#a0a0a0"></div>
<div class="ab" style="left:514px;top:504px;width:584.5px;height:1px;background:#a0a0a0"></div>
<div class="ab" style="left:514px;top:524px;width:584.5px;height:1px;background:#a0a0a0"></div>
<div class="ab" style="left:514px;top:544px;width:584.5px;height:1px;background:#a0a0a0"></div>
<div class="ab" style="left:514px;top:564px;width:584.5px;height:1px;background:#a0a0a0"></div>
<div class="ab" style="left:514px;top:584px;width:584.5px;height:1px;background:#a0a0a0"></div>
<div class="ab" style="left:514px;top:604px;width:584.5px;height:1px;background:#a0a0a0"></div>
<div class="ab" style="left:514px;top:624px;width:584.5px;height:1px;background:#a0a0a0"></div>
<div class="ab" style="left:514px;top:644px;width:584.5px;height:1px;background:#a0a0a0"></div>
<div class="ab" style="left:514px;top:664px;width:584.5px;height:1px;background:#a0a0a0"></div>
<div class="ab" style="left:514px;top:684px;width:584.5px;height:1px;background:#a0a0a0"></div>
<div class="ab" style="left:514px;top:704px;width:584.5px;height:1px;background:#a0a0a0"></div>
<div class="ab" style="left:514px;top:724px;width:584.5px;height:1px;background:#a0a0a0"></div>
<div class="ab" style="left:541px;top:304px;width:1px;height:421px;background:#a0a0a0"></div>
<div class="ab" style="left:600px;top:304px;width:1px;height:421px;background:#a0a0a0"></div>
<div class="ab" style="left:637px;top:304px;width:1px;height:421px;background:#a0a0a0"></div>
<div class="ab" style="left:727px;top:304px;width:1px;height:421px;background:#a0a0a0"></div>
<div class="ab" style="left:788px;top:304px;width:1px;height:421px;background:#a0a0a0"></div>
<div class="ab" style="left:834px;top:304px;width:1px;height:421px;background:#a0a0a0"></div>
<div class="ab" style="left:864px;top:304px;width:1px;height:421px;background:#a0a0a0"></div>
<div class="ab" style="left:926px;top:304px;width:1px;height:421px;background:#a0a0a0"></div>
<div class="ab" style="left:1009px;top:304px;width:1px;height:421px;background:#a0a0a0"></div>
<div class="ab" style="left:1055px;top:304px;width:1px;height:421px;background:#a0a0a0"></div>
<div class="ab" style="left:1098px;top:304px;width:1px;height:421px;background:#a0a0a0"></div>
<div class="ab" style="left:514px;top:725px;width:585px;height:45px;background:#e3e3e3"></div>
<div class="ab" style="left:512px;top:770px;width:588px;height:1px;background:#000"></div>
<div class="ab" style="left:514px;top:625px;width:27px;height:19px;border:1px dotted #000"></div>
<div class="ab" style="left:1119px;top:283px;width:158px;height:490px;background:#fff;border:1px solid #898c95"></div>
<div class="ab" style="left:1121px;top:265px;width:41px;height:20px;background:linear-gradient(#f3f3f3,#e1e1e1);border:1px solid #898c95;border-bottom:none"></div>
<div class="ab" style="left:1206px;top:265px;width:41px;height:20px;background:linear-gradient(#f3f3f3,#e1e1e1);border:1px solid #898c95;border-bottom:none"></div>
<div class="ab" style="left:1161px;top:263px;width:46px;height:22px;background:#fff;border:1px solid #898c95;border-bottom:none"></div>
<div class="t " style="left:1127px;top:269px;">About</div>
<div class="t " style="left:1169px;top:267px;">Log</div>
<div class="t " style="left:1211px;top:269px;">Details</div>
<div class="ab" style="left:1123px;top:285px;width:152px;height:486px;background:#fff;border:1px solid #d9dadf"></div>
<div class="t " style="left:1126px;top:288px;letter-spacing:-0.7px">NEC 22D67887 32</div>
<div class="t " style="left:1126px;top:301px;letter-spacing:-0.7px">NEC 22D67887 32</div>
<div class="t " style="left:1126px;top:314px;letter-spacing:-0.7px">NEC 22D6D02F 32</div>
<div class="t " style="left:1126px;top:327px;letter-spacing:-0.7px">NEC 22D6A857 32</div>
<div class="t " style="left:1126px;top:340px;letter-spacing:-0.7px">NEC 22D632CD 32</div>
<div class="t " style="left:1126px;top:353px;letter-spacing:-0.7px">NEC 22D64AB5 32</div>
<div class="t " style="left:1126px;top:366px;letter-spacing:-0.7px">NEC 22D6D02F 32</div>
<div class="t " style="left:1126px;top:379px;letter-spacing:-0.7px">NEC 22D6A857 32</div>
<div class="t " style="left:1126px;top:392px;letter-spacing:-0.7px">NEC 22D632CD 32</div>
<div class="t " style="left:1126px;top:405px;letter-spacing:-0.7px">NEC 22D64AB5 32</div>
<div class="t " style="left:1126px;top:418px;letter-spacing:-0.7px">NEC 22D632CD 32</div>
<div class="t " style="left:1126px;top:431px;letter-spacing:-0.7px">NEC 22D6A857 32</div>
<div class="t " style="left:1126px;top:444px;letter-spacing:-0.7px">NEC 22D6D02F 32</div>
<div class="t " style="left:1126px;top:457px;letter-spacing:-0.7px">NEC 22D67887 32</div>
<div class="t " style="left:1126px;top:470px;letter-spacing:-0.7px">NEC 22D652AD 32</div>
<div class="t " style="left:1126px;top:483px;letter-spacing:-0.7px">NEC 22D658A7 32</div>
<div class="t " style="left:1126px;top:496px;letter-spacing:-0.7px">NEC 22D65AA5 32</div>
<div class="t " style="left:1126px;top:509px;letter-spacing:-0.7px">NEC 22D6807F 32</div>
<div class="t " style="left:1126px;top:522px;letter-spacing:-0.7px">NEC 22D6E01F 32</div>
<div class="t " style="left:1126px;top:535px;letter-spacing:-0.7px">NEC 22D6C03F 32</div>
<div class="t " style="left:1126px;top:548px;letter-spacing:-0.7px">NEC 22D69867 32</div>
<div class="t " style="left:1126px;top:561px;letter-spacing:-0.7px">NEC 22D6708F 32</div>
<div class="t " style="left:1126px;top:574px;letter-spacing:-0.7px">NEC 22D6D827 32</div>
<div class="t " style="left:1126px;top:587px;letter-spacing:-0.7px">NEC 22D6C837 32</div>
<div class="t " style="left:1126px;top:600px;letter-spacing:-0.7px">NEC 22D602FD 32</div>
<div class="t " style="left:1126px;top:613px;letter-spacing:-0.7px">NEC 22D6A05F 32</div>
<div class="t " style="left:1126px;top:626px;letter-spacing:-0.7px">NEC 22D60AF5 32</div>
<div class="t " style="left:1126px;top:639px;letter-spacing:-0.7px">NEC 22D6E817 32</div>
<div class="t " style="left:1126px;top:652px;letter-spacing:-0.7px">NEC 22D6F807 32</div>
<div class="t " style="left:1126px;top:665px;letter-spacing:-0.7px">NEC 22D6F00F 32</div>
<div class="t " style="left:1126px;top:678px;letter-spacing:-0.7px">NEC 22D64AB5 32</div>
<div class="t " style="left:1126px;top:691px;letter-spacing:-0.7px">NEC 22D632CD 32</div>
<div class="t " style="left:1126px;top:704px;letter-spacing:-0.7px">NEC 22D6A857 32</div>
<div class="t " style="left:1126px;top:717px;letter-spacing:-0.7px">NEC 22D6D02F 32</div>
<div class="t " style="left:1126px;top:730px;letter-spacing:-0.7px">NEC 22D67887 32</div>
<div class="t " style="left:1126px;top:743px;letter-spacing:-0.7px">NEC 22D652AD 32</div>
<div class="ab" style="left:1257px;top:287px;width:17px;height:483px;background:linear-gradient(90deg,#e8e8e8,#f4f4f4 40%,#ececec)"></div>
<svg class="ab" style="left:1260px;top:291px" width="11" height="8"><path d="M1.5 6 L5.5 2 L9.5 6 Z" fill="#505050"/></svg>
<svg class="ab" style="left:1260px;top:756px" width="11" height="8"><path d="M2 2 L9 2 L5.5 6 Z" fill="#606060"/></svg>
<div class="ab" style="left:1258px;top:305px;width:14px;height:15px;background:linear-gradient(90deg,#ececec,#d8d8d8 60%,#c8c8c8);border:1px solid #9a9a9a;border-radius:2px"></div>
<div class="ab" style="left:0px;top:775px;width:1280px;height:1px;background:#c8c8c8"></div>
<div class="ab" style="left:0px;top:776px;width:1280px;height:1px;background:#fff"></div>
<div class="ab" style="left:0px;top:798px;width:1280px;height:1px;background:#3a3a3a"></div>
<div class="ab" style="left:0px;top:799px;width:1280px;height:1px;background:#bcd0e6"></div>
<div class="ab" style="left:53px;top:777px;width:1px;height:21px;background:#c0c0c0"></div>
<div class="ab" style="left:54px;top:777px;width:1px;height:21px;background:#fff"></div>
<div class="ab" style="left:219px;top:777px;width:1px;height:21px;background:#c0c0c0"></div>
<div class="ab" style="left:220px;top:777px;width:1px;height:21px;background:#fff"></div>
<div class="ab" style="left:333px;top:777px;width:1px;height:21px;background:#c0c0c0"></div>
<div class="ab" style="left:334px;top:777px;width:1px;height:21px;background:#fff"></div>
<div class="ab" style="left:588px;top:777px;width:1px;height:21px;background:#c0c0c0"></div>
<div class="ab" style="left:589px;top:777px;width:1px;height:21px;background:#fff"></div>
<div class="ab" style="left:634px;top:777px;width:1px;height:21px;background:#c0c0c0"></div>
<div class="ab" style="left:635px;top:777px;width:1px;height:21px;background:#fff"></div>
<div class="ab" style="left:761px;top:777px;width:1px;height:21px;background:#c0c0c0"></div>
<div class="ab" style="left:762px;top:777px;width:1px;height:21px;background:#fff"></div>
<div class="ab" style="left:780px;top:777px;width:1px;height:21px;background:#c0c0c0"></div>
<div class="ab" style="left:781px;top:777px;width:1px;height:21px;background:#fff"></div>
<div class="ab" style="left:865px;top:777px;width:1px;height:21px;background:#c0c0c0"></div>
<div class="ab" style="left:866px;top:777px;width:1px;height:21px;background:#fff"></div>
<div class="ab" style="left:935px;top:777px;width:1px;height:21px;background:#c0c0c0"></div>
<div class="ab" style="left:936px;top:777px;width:1px;height:21px;background:#fff"></div>
<div class="t " style="left:4px;top:781px;">AnalysIR</div>
<div class="t " style="left:58px;top:781px;">C.LUDWIG@CLX.DE</div>
<div class="t " style="left:224px;top:781px;">www.AnalysIR.com</div>
<div class="t " style="left:337px;top:781px;">Carrier Frequency: 37,760 Hz</div>
<div class="t " style="left:592px;top:781px;">Arduino</div>
<div class="t " style="left:639px;top:781px;">Channel 1 Selected</div>
<div class="ab" style="left:764px;top:778px;width:13px;height:19px;background:#008000"></div>
<div class="ab" style="left:782px;top:777px;width:83px;height:21px;background:#fff;border:1px solid #e3e9ef"></div>
<div class="t " style="left:785px;top:780px;">COM29</div>
<svg class="ab" style="left:850px;top:783px" width="12" height="8"><path d="M1 1 H10 L5.5 6 Z" fill="#000"/></svg>
<div class="t " style="left:871px;top:781px;">115.200 bps</div>
<div class="ab" style="left:942px;top:785px;width:6px;height:6px;border-radius:3px;background:#888"></div>
</body></html>
